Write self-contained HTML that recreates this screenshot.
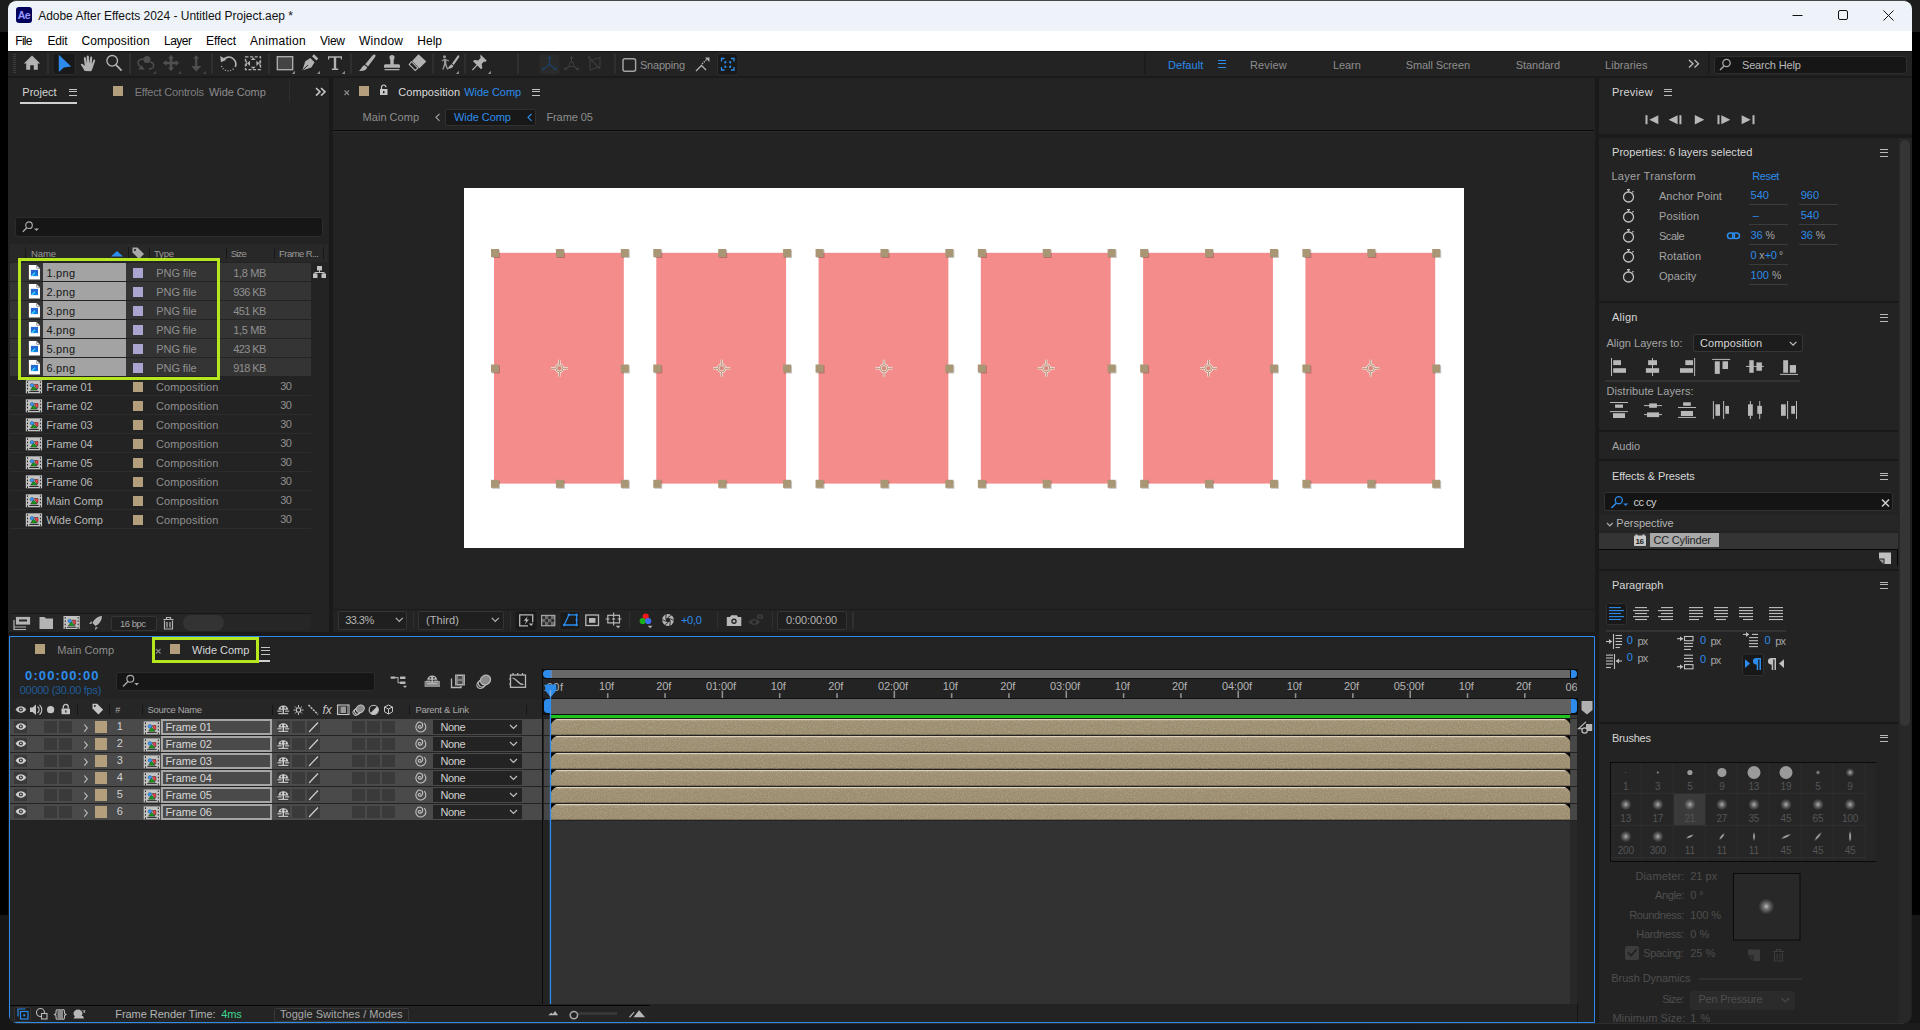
<!DOCTYPE html>
<html lang="en">
<head>
<meta charset="utf-8">
<title>Adobe After Effects 2024 - Untitled Project.aep *</title>
<style>
*{box-sizing:border-box;margin:0;padding:0}
html,body{width:1920px;height:1030px;overflow:hidden;background:#000}
body{font-family:"Liberation Sans",sans-serif;font-size:12px;color:#b4b4b4;position:relative}
.a{position:absolute}
.t{position:absolute;white-space:nowrap}
svg{position:absolute;overflow:visible}
#win{position:absolute;left:8px;top:1px;width:1904px;height:1022px;border-radius:8px;overflow:hidden;background:#1a1a1a}
#in{position:absolute;left:-8px;top:-1px;width:1920px;height:1030px}
.p{position:absolute;background:#232323}
.ham{position:absolute;width:9px;height:7.6px;border-top:1.4px solid #c4c4c4;border-bottom:1.4px solid #c4c4c4}
.ham:after{content:"";position:absolute;left:0;right:0;top:1.7px;border-top:1.4px solid;border-color:inherit}
</style>
</head>
<body>
<div class="a" style="left:0;top:0;width:1920px;height:32px;background:#1c1c1c"></div>
<div class="a" style="left:0;top:915px;width:1920px;height:115px;background:#161616"></div>
<div class="a" style="left:42px;top:1023px;width:1878px;height:7px;background:linear-gradient(90deg,#15171f 0,#15171f 1250px,#1c1c1c 1500px)"></div>
<div class="a" style="left:14px;top:0;width:1892px;height:1px;background:#474747"></div>
<div class="a" style="left:16px;top:1023px;width:1888px;height:1.300px;background:#2e2e2e"></div>
<div id="win"><div id="in">
<!-- top -->
<div class="a" style="left:8px;top:1px;width:1904px;height:30px;background:#eef3f9;"></div>
<div class="a" style="left:16px;top:7px;width:16px;height:16px;background:#00005b;border-radius:3px;color:#9999ff;font-size:10.500px;line-height:16.500px;text-align:center;font-weight:bold;letter-spacing:-0.500px">Ae</div>
<div class="t" style="left:38.20px;top:9px;font-size:12px;line-height:14px;color:#111;letter-spacing:-0.024px;">Adobe After Effects 2024 - Untitled Project.aep *</div>
<svg style="left:1790px;top:5px;" width="120" height="22" viewBox="0 0 120 22"><path d="M2.5 10.5h10" stroke="#111" stroke-width="1" fill="none"/><rect x="48.5" y="5.5" width="9" height="9" rx="1.5" stroke="#111" stroke-width="1" fill="none"/><path d="M93.5 5.5l10 10M103.5 5.5l-10 10" stroke="#111" stroke-width="1" fill="none"/></svg>
<div class="a" style="left:8px;top:31px;width:1904px;height:20px;background:#fff;"></div>
<div class="t" style="left:15.30px;top:34px;font-size:12px;line-height:14px;color:#000;letter-spacing:-0.711px;">File</div>
<div class="t" style="left:47.40px;top:34px;font-size:12px;line-height:14px;color:#000;letter-spacing:-0.193px;">Edit</div>
<div class="t" style="left:81.40px;top:34px;font-size:12px;line-height:14px;color:#000;letter-spacing:0.160px;">Composition</div>
<div class="t" style="left:164.00px;top:34px;font-size:12px;line-height:14px;color:#000;letter-spacing:-0.504px;">Layer</div>
<div class="t" style="left:206.00px;top:34px;font-size:12px;line-height:14px;color:#000;letter-spacing:-0.093px;">Effect</div>
<div class="t" style="left:250.00px;top:34px;font-size:12px;line-height:14px;color:#000;letter-spacing:0.292px;">Animation</div>
<div class="t" style="left:320.00px;top:34px;font-size:12px;line-height:14px;color:#000;letter-spacing:-0.264px;">View</div>
<div class="t" style="left:359.00px;top:34px;font-size:12px;line-height:14px;color:#000;letter-spacing:0.264px;">Window</div>
<div class="t" style="left:417.30px;top:34px;font-size:12px;line-height:14px;color:#000;letter-spacing:0.007px;">Help</div>
<div class="a" style="left:8px;top:51px;width:1904px;height:25px;background:#232323;border-top:1px solid #141414;"></div>
<div class="a" style="left:13px;top:54px;width:3px;height:20px;background:repeating-linear-gradient(#3c3c3c 0,#3c3c3c 1px,transparent 1px,transparent 2px);"></div>
<div class="a" style="left:47px;top:53px;width:2px;height:21px;background:#2f2f2f;border-radius:1px;"></div>
<div class="a" style="left:129px;top:53px;width:2px;height:21px;background:#2f2f2f;border-radius:1px;"></div>
<div class="a" style="left:211px;top:53px;width:2px;height:21px;background:#2f2f2f;border-radius:1px;"></div>
<div class="a" style="left:268px;top:53px;width:2px;height:21px;background:#2f2f2f;border-radius:1px;"></div>
<div class="a" style="left:350px;top:53px;width:2px;height:21px;background:#2f2f2f;border-radius:1px;"></div>
<div class="a" style="left:432px;top:53px;width:2px;height:21px;background:#2f2f2f;border-radius:1px;"></div>
<div class="a" style="left:464px;top:53px;width:2px;height:21px;background:#2f2f2f;border-radius:1px;"></div>
<div class="a" style="left:517px;top:53px;width:2px;height:21px;background:#2f2f2f;border-radius:1px;"></div>
<div class="a" style="left:614px;top:53px;width:2px;height:21px;background:#2f2f2f;border-radius:1px;"></div>
<svg style="left:0px;top:0px;" width="1920" height="80" viewBox="0 0 1920 80"><path d="M32 55.6l-8.2 7.9h2.4v6.3h4v-4.6h3.6v4.6h4v-6.3h2.4z" fill="#b2b2b2"/><rect x="53" y="53" width="22.300" height="21.500" rx="2.500" fill="#191919" stroke="#2d2d2d"/><path d="M58.8 54.8l12.4 11.6-7.4 1.1-5 4.6z" fill="#2d8ceb"/><path d="M84.6 71c-1.2-2.4-2.6-4.6-3.9-6.4 0.6-1 1.7-0.9 2.5-0.2l1.6 1.7-1-8.4c0.6-0.9 1.7-0.7 2 0.2l1 5.6-0.1-7.4c0.6-0.9 1.9-0.8 2.1 0.1l0.5 7.3 1-6.6c0.6-0.8 1.8-0.6 1.9 0.3l-0.5 7.1 1.9-4.6c0.7-0.6 1.7-0.2 1.6 0.7l-2.5 7.6c-0.4 1.6-1 2.4-1.7 3.2z" fill="#b2b2b2"/><circle cx="112.2" cy="60.8" r="5.3" fill="none" stroke="#b2b2b2" stroke-width="1.4"/><path d="M116 64.8l5.6 5.8" stroke="#b2b2b2" stroke-width="1.8"/><circle cx="147" cy="59.5" r="3.6" fill="#4f4f4f"/><path d="M144 59c-4-0.5-7 2-5.5 5.5l1.5 2" fill="none" stroke="#4f4f4f" stroke-width="1.4"/><path d="M138.500 69.5h6l-3-4.500z" fill="#4f4f4f"/><path d="M150.500 62c4 1.500 5 6-1.500 7" fill="none" stroke="#4f4f4f" stroke-width="1.400"/><path d="M156 74v-3.2l-3.2 3.2z" fill="#444"/><path d="M171 54.800l3 3.600h-1.700v3.300h3.300v-1.700l3.600 3-3.600 3v-1.700h-3.300v3.300h1.700l-3 3.600-3-3.600h1.700v-3.300h-3.300v1.700l-3.600-3 3.600-3v1.700h3.300v-3.300h-1.700z" fill="#4f4f4f"/><path d="M181 74v-3.2l-3.2 3.2z" fill="#444"/><path d="M196.200 55.200l3 3.200h-1.900v7.600h3.900l-5 5.500-5-5.500h3.900v-7.600h-1.900z" fill="#4f4f4f"/><path d="M206 74v-3.2l-3.2 3.2z" fill="#444"/><path d="M222.500 60.500c3-4 8-4.500 11-1.500 2.500 2.500 2.800 5.500 1.800 8" fill="none" stroke="#b2b2b2" stroke-width="1.600"/><path d="M220.200 56l0.800 6.200 5.400-2.400z" fill="#b2b2b2"/><path d="M221.500 66c1.500 5 8 6.500 12.500 2.500" fill="none" stroke="#b2b2b2" stroke-width="1.300" stroke-dasharray="1 1.700"/><rect x="245.500" y="56.800" width="15" height="12.800" fill="none" stroke="#b2b2b2" stroke-width="1.300" stroke-dasharray="3 1.600"/><path d="M253.200 57.600l2.500 2.300h-5zM253.200 69l2.500-2.300h-5zM247 63.300l3-2.600v5.200zM259.400 63.300l-3-2.600v5.200z" fill="#b2b2b2"/><path d="M246.600 60.700v5.200M259.800 60.700v5.200" stroke="#b2b2b2" stroke-width="0.900"/><rect x="277.300" y="56.700" width="15.400" height="13" fill="#444" stroke="#b2b2b2" stroke-width="1.300"/><path d="M295 74v-3.2l-3.2 3.2z" fill="#8a8a8a"/><path d="M302.300 70.600l3-9.300 5-3.400 4.300 4.400-3.300 5.100zM312 56.200l2-2 4.300 4.300-2 2z" fill="#b2b2b2"/><path d="M302.600 70.300l5.300-5.300" stroke="#232323" stroke-width="1"/><path d="M320 74v-3.2l-3.2 3.2z" fill="#8a8a8a"/><path d="M328 56.300h14v3.300h-1.200v-1.800h-4.600v10.700h2v1.500h-6.400v-1.500h2v-10.700h-4.600v1.800h-1.200z" fill="#b2b2b2"/><path d="M345 74v-3.2l-3.2 3.2z" fill="#8a8a8a"/><path d="M375 54.600c1 0.700 0.400 2.100-0.200 3l-6.800 8.800-2.800-2.200 7.200-8.600c0.700-0.800 1.800-1.600 2.600-1zM364.300 64.900l3 2.400c-0.900 3.200-4.400 4.200-8.500 3.700 2.400-1.300 2.500-4.400 5.500-6.100z" fill="#b2b2b2"/><path d="M392 55a2.600 2.600 0 0 1 2.600 2.600c0 1.200-0.900 1.800-0.900 3.200v3.400h4.400c1.200 0 1.900 0.600 1.900 1.800v1.800h-16v-1.800c0-1.200 0.700-1.800 1.900-1.800h4.400v-3.400c0-1.400-0.900-2-0.900-3.200a2.600 2.600 0 0 1 2.600-2.600zM384.600 69h14.800v1.200h-14.800z" fill="#b2b2b2"/><path d="M418.500 54.300l7.800 7.200-6.800 6.800-7.400-7.400z" fill="#b2b2b2"/><path d="M411.500 61.700l-2.300 2.700 6 6 2.800-2.400z" fill="none" stroke="#b2b2b2" stroke-width="1.100"/><circle cx="444.500" cy="56.700" r="1.500" fill="#999"/><path d="M444.500 58.600l-3 2.200 0.500 0.800 2-1.200v3.600l-1.800 5.600h1.300l1.800-4.400 1.600 4.400h1.300l-1.800-5.800v-3.200l2.400 0.800 0.300-0.900z" fill="#999"/><path d="M459 55.500c0.700 0.600 0.200 1.600-0.200 2.200l-5 7.200-1.800-1.400 5.200-7.200c0.500-0.600 1.200-1.200 1.800-0.800zM451.400 64.200l2 1.600c-0.600 2.200-3.200 3-6.200 2.800 1.600-1 2-3 4.200-4.400z" fill="#b2b2b2"/><path d="M459 74v-3.2l-3.2 3.2z" fill="#8a8a8a"/><path d="M480.500 54.600l6.200 6-1.400 1.300-1.200-0.400-2.400 2.600 0.600 3.800-1.300 1.300-3.600-3.600-4.600 4.800-0.800-0.800 4.600-4.800-3.600-3.600 1.300-1.300 3.800 0.600 2.600-2.400-0.400-1.200z" fill="#b2b2b2"/><path d="M491 74v-3.2l-3.2 3.2z" fill="#8a8a8a"/><rect x="539.5" y="54.500" width="20" height="20" rx="2" fill="#2a2a2a"/><path d="M549.5 57v7.500l-6 4.500M549.5 64.500l6 4.500" fill="none" stroke="#1b426b" stroke-width="1.100"/><path d="M549.5 55.800l2 2.600h-4zM541.9 70.200l1-3 2.200 2.600zM557.1 70.200l-1-3-2.200 2.600z" fill="#1b426b"/><path d="M571.5 57v7.500l-6 4.500M571.5 64.500l6 4.500" fill="none" stroke="#404040" stroke-width="1.100"/><path d="M571.5 55.800l2 2.600h-4zM563.9 70.200l1-3 2.200 2.600zM579.1 70.200l-1-3-2.200 2.600z" fill="#404040"/><circle cx="571.5" cy="64.500" r="2.300" fill="#232323" stroke="#404040"/><path d="M590 61l10-3.500v9l-10 3.500zM588.500 57l11.500 12" fill="none" stroke="#3c3c3c" stroke-width="1.200"/><path d="M588 56.300h3l-3 3z" fill="#3c3c3c"/><rect x="623" y="58.700" width="12.600" height="12.600" rx="2" fill="none" stroke="#a2a2a2" stroke-width="1.500"/><path d="M696 71l5.500-5.500 4.500 4.500" fill="none" stroke="#b2b2b2" stroke-width="1.300"/><path d="M702 64l5-5" stroke="#b2b2b2" stroke-width="1.300" stroke-dasharray="1.500 1"/><path d="M709.500 57.500v4.500l-4.500-4.500z" fill="#b2b2b2"/><rect x="717.500" y="53.500" width="20.500" height="21.500" rx="2.500" fill="#191919" stroke="#2d2d2d"/><path d="M721.500 61.500v-3h3M731 58.500h3v3M734 67v3h-3M724.500 70h-3v-3M725 63.500v-1.500h1.500M729 62h1.500v1.500M730.500 65.500v1.500h-1.500M726.500 67h-1.500v-1.500" fill="none" stroke="#2d8ceb" stroke-width="1.300"/></svg>
<div class="t" style="left:640.00px;top:59px;font-size:11px;line-height:12px;color:#8e8e8e;letter-spacing:-0.212px;">Snapping</div>
<div class="a" style="left:1144px;top:53px;width:2px;height:21px;background:#1c1c1c;"></div>
<div class="t" style="left:1168.00px;top:59px;font-size:11px;line-height:12px;color:#2d8ceb;letter-spacing:0.075px;">Default</div>
<div class="ham" style="left:1218px;top:60px;border-color:#2d8ceb;width:8px"></div><style>#hb:after{border-color:#2d8ceb}</style><div class="t" style="left:1250.00px;top:59px;font-size:11px;line-height:12px;color:#8e8e8e;letter-spacing:0.127px;">Review</div>
<div class="t" style="left:1333.00px;top:59px;font-size:11px;line-height:12px;color:#8e8e8e;letter-spacing:-0.083px;">Learn</div>
<div class="t" style="left:1405.80px;top:59px;font-size:11px;line-height:12px;color:#8e8e8e;letter-spacing:-0.110px;">Small Screen</div>
<div class="t" style="left:1515.80px;top:59px;font-size:11px;line-height:12px;color:#8e8e8e;letter-spacing:-0.063px;">Standard</div>
<div class="t" style="left:1605.00px;top:59px;font-size:11px;line-height:12px;color:#8e8e8e;letter-spacing:0.040px;">Libraries</div>
<svg style="left:1688px;top:59px;" width="12" height="10" viewBox="0 0 12 10"><path d="M1 1l4 3.800-4 3.800M6.500 1l4 3.800-4 3.800" fill="none" stroke="#b8b8b8" stroke-width="1.400"/></svg>
<div class="a" style="left:1708px;top:53px;width:2px;height:21px;background:#1c1c1c;"></div>
<div class="a" style="left:1714px;top:55.5px;width:193px;height:18.5px;background:#161616;border:1px solid #2e2e2e;border-radius:3px;"></div>
<svg style="left:1718px;top:58px;" width="14" height="13" viewBox="0 0 14 13"><circle cx="8.500" cy="5" r="3.700" fill="none" stroke="#a8a8a8" stroke-width="1.300"/><path d="M6 8l-4 4" stroke="#a8a8a8" stroke-width="1.500"/></svg>
<div class="t" style="left:1742.00px;top:59px;font-size:11px;line-height:12px;color:#b8b8b8;letter-spacing:-0.173px;">Search Help</div>
<!-- proj -->
<div class="a" style="left:8px;top:78px;width:321px;height:554px;background:#232323;"></div>
<div class="t" style="left:22.30px;top:86px;font-size:11px;line-height:12px;color:#d6d6d6;letter-spacing:0.011px;">Project</div>
<div class="ham" style="left:69px;top:88.500px;width:8px"></div><div class="a" style="left:20px;top:102px;width:57px;height:2px;background:#d0d0d0;"></div>
<div class="a" style="left:113px;top:86px;width:10px;height:10px;background:#b49f7c;"></div>
<div class="t" style="left:134.70px;top:86px;font-size:11px;line-height:12px;color:#7e7e7e;letter-spacing:-0.189px;">Effect Controls</div>
<div class="t" style="left:209.00px;top:86px;font-size:11px;line-height:12px;color:#8e8e8e;letter-spacing:-0.082px;">Wide Comp</div>
<div class="a" style="left:289px;top:81px;width:1px;height:21px;background:#2e2e2e;"></div>
<svg style="left:315px;top:87px;" width="11" height="10" viewBox="0 0 11 10"><path d="M1 1l4 3.800-4 3.800M6 1l4 3.800-4 3.800" fill="none" stroke="#c4c4c4" stroke-width="1.600"/></svg>
<div class="a" style="left:15px;top:217px;width:308px;height:19.5px;background:#161616;border:1px solid #2c2c2c;border-radius:3px;"></div>
<svg style="left:21px;top:220px;" width="20" height="14" viewBox="0 0 20 14"><circle cx="8" cy="5.200" r="3.300" fill="none" stroke="#a8a8a8" stroke-width="1.200"/><path d="M5.800 7.800l-4 4" stroke="#a8a8a8" stroke-width="1.400"/><path d="M13 8.500h5l-2.500 2.500z" fill="#a8a8a8"/></svg>
<div class="a" style="left:10px;top:244px;width:318px;height:18px;background:#282828;"></div>
<div class="a" style="left:25px;top:247px;width:1.2px;height:12px;background:#171717;"></div>
<div class="a" style="left:127.5px;top:247px;width:1.2px;height:12px;background:#171717;"></div>
<div class="a" style="left:148.5px;top:247px;width:1.2px;height:12px;background:#171717;"></div>
<div class="a" style="left:225.5px;top:247px;width:1.2px;height:12px;background:#171717;"></div>
<div class="a" style="left:273.5px;top:247px;width:1.2px;height:12px;background:#171717;"></div>
<div class="a" style="left:323px;top:247px;width:1.2px;height:12px;background:#171717;"></div>
<div class="t" style="left:31.00px;top:248px;font-size:9.5px;line-height:11px;color:#9a9a9a;letter-spacing:-0.114px;">Name</div>
<svg style="left:111px;top:250px;" width="13" height="7" viewBox="0 0 13 7"><path d="M0 6.500l6-5.500 6 5.500z" fill="#2d8ceb"/></svg>
<svg style="left:131px;top:246px;" width="14" height="14" viewBox="0 0 14 14"><path d="M1.500 1.500h5l6.500 6.500-5 5-6.500-6.500z" fill="#a8a8a8"/><circle cx="4" cy="4" r="1.100" fill="#282828"/></svg>
<div class="t" style="left:154.00px;top:248px;font-size:9.5px;line-height:11px;color:#9a9a9a;letter-spacing:-0.198px;">Type</div>
<div class="t" style="left:230.70px;top:248px;font-size:9.5px;line-height:11px;color:#9a9a9a;letter-spacing:-0.793px;">Size</div>
<div class="t" style="left:279.00px;top:248px;font-size:9.5px;line-height:11px;color:#9a9a9a;letter-spacing:-0.540px;">Frame R...</div>
<div class="a" style="left:10px;top:263px;width:301px;height:18px;background:#343434;"></div>
<div class="a" style="left:43px;top:263px;width:83px;height:18px;background:#a3a3a3;"></div>
<div class="t" style="left:46.40px;top:267px;font-size:11px;line-height:12px;color:#161616;letter-spacing:0.269px;">1.png</div>
<div class="a" style="left:132.5px;top:268px;width:10px;height:10px;background:#a9a5d0;"></div>
<div class="t" style="left:156.30px;top:267px;font-size:11px;line-height:12px;color:#909090;letter-spacing:-0.079px;">PNG file</div>
<div class="t" style="left:233.20px;top:267px;font-size:11px;line-height:12px;color:#909090;letter-spacing:-0.329px;">1,8 MB</div>
<div class="a" style="left:10px;top:282px;width:301px;height:18px;background:#343434;"></div>
<div class="a" style="left:43px;top:282px;width:83px;height:18px;background:#a3a3a3;"></div>
<div class="t" style="left:46.40px;top:286px;font-size:11px;line-height:12px;color:#161616;letter-spacing:0.269px;">2.png</div>
<div class="a" style="left:132.5px;top:287px;width:10px;height:10px;background:#a9a5d0;"></div>
<div class="t" style="left:156.30px;top:286px;font-size:11px;line-height:12px;color:#909090;letter-spacing:-0.079px;">PNG file</div>
<div class="t" style="left:233.20px;top:286px;font-size:11px;line-height:12px;color:#909090;letter-spacing:-0.577px;">936 KB</div>
<div class="a" style="left:10px;top:301px;width:301px;height:18px;background:#343434;"></div>
<div class="a" style="left:43px;top:301px;width:83px;height:18px;background:#a3a3a3;"></div>
<div class="t" style="left:46.40px;top:305px;font-size:11px;line-height:12px;color:#161616;letter-spacing:0.269px;">3.png</div>
<div class="a" style="left:132.5px;top:306px;width:10px;height:10px;background:#a9a5d0;"></div>
<div class="t" style="left:156.30px;top:305px;font-size:11px;line-height:12px;color:#909090;letter-spacing:-0.079px;">PNG file</div>
<div class="t" style="left:233.20px;top:305px;font-size:11px;line-height:12px;color:#909090;letter-spacing:-0.577px;">451 KB</div>
<div class="a" style="left:10px;top:320px;width:301px;height:18px;background:#343434;"></div>
<div class="a" style="left:43px;top:320px;width:83px;height:18px;background:#a3a3a3;"></div>
<div class="t" style="left:46.40px;top:324px;font-size:11px;line-height:12px;color:#161616;letter-spacing:0.269px;">4.png</div>
<div class="a" style="left:132.5px;top:325px;width:10px;height:10px;background:#a9a5d0;"></div>
<div class="t" style="left:156.30px;top:324px;font-size:11px;line-height:12px;color:#909090;letter-spacing:-0.079px;">PNG file</div>
<div class="t" style="left:233.20px;top:324px;font-size:11px;line-height:12px;color:#909090;letter-spacing:-0.329px;">1,5 MB</div>
<div class="a" style="left:10px;top:339px;width:301px;height:18px;background:#343434;"></div>
<div class="a" style="left:43px;top:339px;width:83px;height:18px;background:#a3a3a3;"></div>
<div class="t" style="left:46.40px;top:343px;font-size:11px;line-height:12px;color:#161616;letter-spacing:0.269px;">5.png</div>
<div class="a" style="left:132.5px;top:344px;width:10px;height:10px;background:#a9a5d0;"></div>
<div class="t" style="left:156.30px;top:343px;font-size:11px;line-height:12px;color:#909090;letter-spacing:-0.079px;">PNG file</div>
<div class="t" style="left:233.20px;top:343px;font-size:11px;line-height:12px;color:#909090;letter-spacing:-0.577px;">423 KB</div>
<div class="a" style="left:10px;top:358px;width:301px;height:18px;background:#343434;"></div>
<div class="a" style="left:43px;top:358px;width:83px;height:18px;background:#a3a3a3;"></div>
<div class="t" style="left:46.40px;top:362px;font-size:11px;line-height:12px;color:#161616;letter-spacing:0.269px;">6.png</div>
<div class="a" style="left:132.5px;top:363px;width:10px;height:10px;background:#a9a5d0;"></div>
<div class="t" style="left:156.30px;top:362px;font-size:11px;line-height:12px;color:#909090;letter-spacing:-0.079px;">PNG file</div>
<div class="t" style="left:233.20px;top:362px;font-size:11px;line-height:12px;color:#909090;letter-spacing:-0.577px;">918 KB</div>
<div class="a" style="left:10px;top:395px;width:301px;height:1px;background:#2c2c2c;"></div>
<div class="t" style="left:46.20px;top:381px;font-size:11px;line-height:12px;color:#b8b8b8;letter-spacing:-0.096px;">Frame 01</div>
<div class="a" style="left:132.5px;top:382px;width:10px;height:10px;background:#b49f7c;"></div>
<div class="t" style="left:156.00px;top:381px;font-size:11px;line-height:12px;color:#909090;letter-spacing:0.116px;">Composition</div>
<div class="t" style="left:280.20px;top:380px;font-size:11px;line-height:12px;color:#909090;letter-spacing:-0.434px;">30</div>
<div class="a" style="left:10px;top:414px;width:301px;height:1px;background:#2c2c2c;"></div>
<div class="t" style="left:46.20px;top:400px;font-size:11px;line-height:12px;color:#b8b8b8;letter-spacing:-0.096px;">Frame 02</div>
<div class="a" style="left:132.5px;top:401px;width:10px;height:10px;background:#b49f7c;"></div>
<div class="t" style="left:156.00px;top:400px;font-size:11px;line-height:12px;color:#909090;letter-spacing:0.116px;">Composition</div>
<div class="t" style="left:280.20px;top:399px;font-size:11px;line-height:12px;color:#909090;letter-spacing:-0.434px;">30</div>
<div class="a" style="left:10px;top:433px;width:301px;height:1px;background:#2c2c2c;"></div>
<div class="t" style="left:46.20px;top:419px;font-size:11px;line-height:12px;color:#b8b8b8;letter-spacing:-0.096px;">Frame 03</div>
<div class="a" style="left:132.5px;top:420px;width:10px;height:10px;background:#b49f7c;"></div>
<div class="t" style="left:156.00px;top:419px;font-size:11px;line-height:12px;color:#909090;letter-spacing:0.116px;">Composition</div>
<div class="t" style="left:280.20px;top:418px;font-size:11px;line-height:12px;color:#909090;letter-spacing:-0.434px;">30</div>
<div class="a" style="left:10px;top:452px;width:301px;height:1px;background:#2c2c2c;"></div>
<div class="t" style="left:46.20px;top:438px;font-size:11px;line-height:12px;color:#b8b8b8;letter-spacing:-0.096px;">Frame 04</div>
<div class="a" style="left:132.5px;top:439px;width:10px;height:10px;background:#b49f7c;"></div>
<div class="t" style="left:156.00px;top:438px;font-size:11px;line-height:12px;color:#909090;letter-spacing:0.116px;">Composition</div>
<div class="t" style="left:280.20px;top:437px;font-size:11px;line-height:12px;color:#909090;letter-spacing:-0.434px;">30</div>
<div class="a" style="left:10px;top:471px;width:301px;height:1px;background:#2c2c2c;"></div>
<div class="t" style="left:46.20px;top:457px;font-size:11px;line-height:12px;color:#b8b8b8;letter-spacing:-0.096px;">Frame 05</div>
<div class="a" style="left:132.5px;top:458px;width:10px;height:10px;background:#b49f7c;"></div>
<div class="t" style="left:156.00px;top:457px;font-size:11px;line-height:12px;color:#909090;letter-spacing:0.116px;">Composition</div>
<div class="t" style="left:280.20px;top:456px;font-size:11px;line-height:12px;color:#909090;letter-spacing:-0.434px;">30</div>
<div class="a" style="left:10px;top:490px;width:301px;height:1px;background:#2c2c2c;"></div>
<div class="t" style="left:46.20px;top:476px;font-size:11px;line-height:12px;color:#b8b8b8;letter-spacing:-0.096px;">Frame 06</div>
<div class="a" style="left:132.5px;top:477px;width:10px;height:10px;background:#b49f7c;"></div>
<div class="t" style="left:156.00px;top:476px;font-size:11px;line-height:12px;color:#909090;letter-spacing:0.116px;">Composition</div>
<div class="t" style="left:280.20px;top:475px;font-size:11px;line-height:12px;color:#909090;letter-spacing:-0.434px;">30</div>
<div class="a" style="left:10px;top:509px;width:301px;height:1px;background:#2c2c2c;"></div>
<div class="t" style="left:46.20px;top:495px;font-size:11px;line-height:12px;color:#b8b8b8;letter-spacing:0.070px;">Main Comp</div>
<div class="a" style="left:132.5px;top:496px;width:10px;height:10px;background:#b49f7c;"></div>
<div class="t" style="left:156.00px;top:495px;font-size:11px;line-height:12px;color:#909090;letter-spacing:0.116px;">Composition</div>
<div class="t" style="left:280.20px;top:494px;font-size:11px;line-height:12px;color:#909090;letter-spacing:-0.434px;">30</div>
<div class="a" style="left:10px;top:528px;width:301px;height:1px;background:#2c2c2c;"></div>
<div class="t" style="left:46.20px;top:514px;font-size:11px;line-height:12px;color:#b8b8b8;letter-spacing:-0.082px;">Wide Comp</div>
<div class="a" style="left:132.5px;top:515px;width:10px;height:10px;background:#b49f7c;"></div>
<div class="t" style="left:156.00px;top:514px;font-size:11px;line-height:12px;color:#909090;letter-spacing:0.116px;">Composition</div>
<div class="t" style="left:280.20px;top:513px;font-size:11px;line-height:12px;color:#909090;letter-spacing:-0.434px;">30</div>
<svg style="left:0px;top:0px;" width="340" height="640" viewBox="0 0 340 640"><g transform="translate(28.9 265)"><path d="M0 0h7.600l3.500 3.500v10.900h-11.100z" fill="#fdfdfd"/><path d="M7.600 0v3.500h3.500z" fill="#5a5a5a"/><path d="M8.200 0.900v2h2z" fill="#fff"/><rect x="2" y="4.900" width="7.100" height="6.200" fill="#2468d4"/><path d="M2 11.100l3.600-3.900 3.500 3.300v0.600z" fill="#0a86e6"/><path d="M2 11.100l3.600-3.900 0.900 0.900-2.700 3z" fill="#44d8ff"/></g><g transform="translate(28.9 284)"><path d="M0 0h7.600l3.500 3.500v10.900h-11.100z" fill="#fdfdfd"/><path d="M7.600 0v3.500h3.500z" fill="#5a5a5a"/><path d="M8.200 0.900v2h2z" fill="#fff"/><rect x="2" y="4.900" width="7.100" height="6.200" fill="#2468d4"/><path d="M2 11.100l3.600-3.900 3.500 3.300v0.600z" fill="#0a86e6"/><path d="M2 11.100l3.600-3.900 0.900 0.900-2.700 3z" fill="#44d8ff"/></g><g transform="translate(28.9 303)"><path d="M0 0h7.600l3.500 3.500v10.900h-11.100z" fill="#fdfdfd"/><path d="M7.600 0v3.500h3.500z" fill="#5a5a5a"/><path d="M8.200 0.900v2h2z" fill="#fff"/><rect x="2" y="4.900" width="7.100" height="6.200" fill="#2468d4"/><path d="M2 11.100l3.600-3.900 3.500 3.300v0.600z" fill="#0a86e6"/><path d="M2 11.100l3.600-3.900 0.900 0.900-2.700 3z" fill="#44d8ff"/></g><g transform="translate(28.9 322)"><path d="M0 0h7.600l3.500 3.500v10.900h-11.100z" fill="#fdfdfd"/><path d="M7.600 0v3.500h3.500z" fill="#5a5a5a"/><path d="M8.200 0.900v2h2z" fill="#fff"/><rect x="2" y="4.900" width="7.100" height="6.200" fill="#2468d4"/><path d="M2 11.100l3.600-3.900 3.500 3.300v0.600z" fill="#0a86e6"/><path d="M2 11.100l3.600-3.900 0.900 0.900-2.700 3z" fill="#44d8ff"/></g><g transform="translate(28.9 341)"><path d="M0 0h7.600l3.500 3.500v10.900h-11.100z" fill="#fdfdfd"/><path d="M7.600 0v3.500h3.500z" fill="#5a5a5a"/><path d="M8.200 0.900v2h2z" fill="#fff"/><rect x="2" y="4.900" width="7.100" height="6.200" fill="#2468d4"/><path d="M2 11.100l3.600-3.900 3.500 3.300v0.600z" fill="#0a86e6"/><path d="M2 11.100l3.600-3.900 0.900 0.900-2.700 3z" fill="#44d8ff"/></g><g transform="translate(28.9 360)"><path d="M0 0h7.600l3.500 3.500v10.900h-11.100z" fill="#fdfdfd"/><path d="M7.600 0v3.500h3.500z" fill="#5a5a5a"/><path d="M8.200 0.900v2h2z" fill="#fff"/><rect x="2" y="4.900" width="7.100" height="6.200" fill="#2468d4"/><path d="M2 11.100l3.600-3.900 3.500 3.300v0.600z" fill="#0a86e6"/><path d="M2 11.100l3.600-3.900 0.900 0.900-2.700 3z" fill="#44d8ff"/></g><g transform="translate(25.8 380.3)"><rect x="0" y="0" width="16.300" height="13" fill="#c2c2c2"/><ellipse cx="1.7" cy="1.8" rx="0.550" ry="0.900" fill="#1c1c1c"/><ellipse cx="1.7" cy="5.1" rx="0.550" ry="0.900" fill="#1c1c1c"/><ellipse cx="1.7" cy="8.4" rx="0.550" ry="0.900" fill="#1c1c1c"/><rect x="1.25" y="11" width="0.900" height="2" fill="#1c1c1c"/><ellipse cx="14.6" cy="1.8" rx="0.550" ry="0.900" fill="#1c1c1c"/><ellipse cx="14.6" cy="5.1" rx="0.550" ry="0.900" fill="#1c1c1c"/><ellipse cx="14.6" cy="8.4" rx="0.550" ry="0.900" fill="#1c1c1c"/><rect x="14.15" y="11" width="0.900" height="2" fill="#1c1c1c"/><rect x="3.500" y="10.800" width="9.500" height="0.900" fill="#1c1c1c"/><path d="M7.700 5.800l3.800 4h-6.600z" fill="#14a014" stroke="#1c1c1c" stroke-width="0.500"/><path d="M8.500 4.200h3.700v4l-1.200 0.300z" fill="#ff4040" stroke="#1c1c1c" stroke-width="0.500"/><circle cx="6.200" cy="5" r="1.800" fill="#3399ff" stroke="#2a4a6a" stroke-width="0.500"/></g><g transform="translate(25.8 399.3)"><rect x="0" y="0" width="16.300" height="13" fill="#c2c2c2"/><ellipse cx="1.7" cy="1.8" rx="0.550" ry="0.900" fill="#1c1c1c"/><ellipse cx="1.7" cy="5.1" rx="0.550" ry="0.900" fill="#1c1c1c"/><ellipse cx="1.7" cy="8.4" rx="0.550" ry="0.900" fill="#1c1c1c"/><rect x="1.25" y="11" width="0.900" height="2" fill="#1c1c1c"/><ellipse cx="14.6" cy="1.8" rx="0.550" ry="0.900" fill="#1c1c1c"/><ellipse cx="14.6" cy="5.1" rx="0.550" ry="0.900" fill="#1c1c1c"/><ellipse cx="14.6" cy="8.4" rx="0.550" ry="0.900" fill="#1c1c1c"/><rect x="14.15" y="11" width="0.900" height="2" fill="#1c1c1c"/><rect x="3.500" y="10.800" width="9.500" height="0.900" fill="#1c1c1c"/><path d="M7.700 5.800l3.800 4h-6.600z" fill="#14a014" stroke="#1c1c1c" stroke-width="0.500"/><path d="M8.500 4.200h3.700v4l-1.200 0.300z" fill="#ff4040" stroke="#1c1c1c" stroke-width="0.500"/><circle cx="6.200" cy="5" r="1.800" fill="#3399ff" stroke="#2a4a6a" stroke-width="0.500"/></g><g transform="translate(25.8 418.3)"><rect x="0" y="0" width="16.300" height="13" fill="#c2c2c2"/><ellipse cx="1.7" cy="1.8" rx="0.550" ry="0.900" fill="#1c1c1c"/><ellipse cx="1.7" cy="5.1" rx="0.550" ry="0.900" fill="#1c1c1c"/><ellipse cx="1.7" cy="8.4" rx="0.550" ry="0.900" fill="#1c1c1c"/><rect x="1.25" y="11" width="0.900" height="2" fill="#1c1c1c"/><ellipse cx="14.6" cy="1.8" rx="0.550" ry="0.900" fill="#1c1c1c"/><ellipse cx="14.6" cy="5.1" rx="0.550" ry="0.900" fill="#1c1c1c"/><ellipse cx="14.6" cy="8.4" rx="0.550" ry="0.900" fill="#1c1c1c"/><rect x="14.15" y="11" width="0.900" height="2" fill="#1c1c1c"/><rect x="3.500" y="10.800" width="9.500" height="0.900" fill="#1c1c1c"/><path d="M7.700 5.800l3.800 4h-6.600z" fill="#14a014" stroke="#1c1c1c" stroke-width="0.500"/><path d="M8.500 4.200h3.700v4l-1.200 0.300z" fill="#ff4040" stroke="#1c1c1c" stroke-width="0.500"/><circle cx="6.200" cy="5" r="1.800" fill="#3399ff" stroke="#2a4a6a" stroke-width="0.500"/></g><g transform="translate(25.8 437.3)"><rect x="0" y="0" width="16.300" height="13" fill="#c2c2c2"/><ellipse cx="1.7" cy="1.8" rx="0.550" ry="0.900" fill="#1c1c1c"/><ellipse cx="1.7" cy="5.1" rx="0.550" ry="0.900" fill="#1c1c1c"/><ellipse cx="1.7" cy="8.4" rx="0.550" ry="0.900" fill="#1c1c1c"/><rect x="1.25" y="11" width="0.900" height="2" fill="#1c1c1c"/><ellipse cx="14.6" cy="1.8" rx="0.550" ry="0.900" fill="#1c1c1c"/><ellipse cx="14.6" cy="5.1" rx="0.550" ry="0.900" fill="#1c1c1c"/><ellipse cx="14.6" cy="8.4" rx="0.550" ry="0.900" fill="#1c1c1c"/><rect x="14.15" y="11" width="0.900" height="2" fill="#1c1c1c"/><rect x="3.500" y="10.800" width="9.500" height="0.900" fill="#1c1c1c"/><path d="M7.700 5.800l3.800 4h-6.600z" fill="#14a014" stroke="#1c1c1c" stroke-width="0.500"/><path d="M8.500 4.200h3.700v4l-1.200 0.300z" fill="#ff4040" stroke="#1c1c1c" stroke-width="0.500"/><circle cx="6.200" cy="5" r="1.800" fill="#3399ff" stroke="#2a4a6a" stroke-width="0.500"/></g><g transform="translate(25.8 456.3)"><rect x="0" y="0" width="16.300" height="13" fill="#c2c2c2"/><ellipse cx="1.7" cy="1.8" rx="0.550" ry="0.900" fill="#1c1c1c"/><ellipse cx="1.7" cy="5.1" rx="0.550" ry="0.900" fill="#1c1c1c"/><ellipse cx="1.7" cy="8.4" rx="0.550" ry="0.900" fill="#1c1c1c"/><rect x="1.25" y="11" width="0.900" height="2" fill="#1c1c1c"/><ellipse cx="14.6" cy="1.8" rx="0.550" ry="0.900" fill="#1c1c1c"/><ellipse cx="14.6" cy="5.1" rx="0.550" ry="0.900" fill="#1c1c1c"/><ellipse cx="14.6" cy="8.4" rx="0.550" ry="0.900" fill="#1c1c1c"/><rect x="14.15" y="11" width="0.900" height="2" fill="#1c1c1c"/><rect x="3.500" y="10.800" width="9.500" height="0.900" fill="#1c1c1c"/><path d="M7.700 5.800l3.800 4h-6.600z" fill="#14a014" stroke="#1c1c1c" stroke-width="0.500"/><path d="M8.500 4.200h3.700v4l-1.200 0.300z" fill="#ff4040" stroke="#1c1c1c" stroke-width="0.500"/><circle cx="6.200" cy="5" r="1.800" fill="#3399ff" stroke="#2a4a6a" stroke-width="0.500"/></g><g transform="translate(25.8 475.3)"><rect x="0" y="0" width="16.300" height="13" fill="#c2c2c2"/><ellipse cx="1.7" cy="1.8" rx="0.550" ry="0.900" fill="#1c1c1c"/><ellipse cx="1.7" cy="5.1" rx="0.550" ry="0.900" fill="#1c1c1c"/><ellipse cx="1.7" cy="8.4" rx="0.550" ry="0.900" fill="#1c1c1c"/><rect x="1.25" y="11" width="0.900" height="2" fill="#1c1c1c"/><ellipse cx="14.6" cy="1.8" rx="0.550" ry="0.900" fill="#1c1c1c"/><ellipse cx="14.6" cy="5.1" rx="0.550" ry="0.900" fill="#1c1c1c"/><ellipse cx="14.6" cy="8.4" rx="0.550" ry="0.900" fill="#1c1c1c"/><rect x="14.15" y="11" width="0.900" height="2" fill="#1c1c1c"/><rect x="3.500" y="10.800" width="9.500" height="0.900" fill="#1c1c1c"/><path d="M7.700 5.800l3.800 4h-6.600z" fill="#14a014" stroke="#1c1c1c" stroke-width="0.500"/><path d="M8.500 4.200h3.700v4l-1.200 0.300z" fill="#ff4040" stroke="#1c1c1c" stroke-width="0.500"/><circle cx="6.200" cy="5" r="1.800" fill="#3399ff" stroke="#2a4a6a" stroke-width="0.500"/></g><g transform="translate(25.8 494.3)"><rect x="0" y="0" width="16.300" height="13" fill="#c2c2c2"/><ellipse cx="1.7" cy="1.8" rx="0.550" ry="0.900" fill="#1c1c1c"/><ellipse cx="1.7" cy="5.1" rx="0.550" ry="0.900" fill="#1c1c1c"/><ellipse cx="1.7" cy="8.4" rx="0.550" ry="0.900" fill="#1c1c1c"/><rect x="1.25" y="11" width="0.900" height="2" fill="#1c1c1c"/><ellipse cx="14.6" cy="1.8" rx="0.550" ry="0.900" fill="#1c1c1c"/><ellipse cx="14.6" cy="5.1" rx="0.550" ry="0.900" fill="#1c1c1c"/><ellipse cx="14.6" cy="8.4" rx="0.550" ry="0.900" fill="#1c1c1c"/><rect x="14.15" y="11" width="0.900" height="2" fill="#1c1c1c"/><rect x="3.500" y="10.800" width="9.500" height="0.900" fill="#1c1c1c"/><path d="M7.700 5.800l3.800 4h-6.600z" fill="#14a014" stroke="#1c1c1c" stroke-width="0.500"/><path d="M8.500 4.200h3.700v4l-1.200 0.300z" fill="#ff4040" stroke="#1c1c1c" stroke-width="0.500"/><circle cx="6.200" cy="5" r="1.800" fill="#3399ff" stroke="#2a4a6a" stroke-width="0.500"/></g><g transform="translate(25.8 513.3)"><rect x="0" y="0" width="16.300" height="13" fill="#c2c2c2"/><ellipse cx="1.7" cy="1.8" rx="0.550" ry="0.900" fill="#1c1c1c"/><ellipse cx="1.7" cy="5.1" rx="0.550" ry="0.900" fill="#1c1c1c"/><ellipse cx="1.7" cy="8.4" rx="0.550" ry="0.900" fill="#1c1c1c"/><rect x="1.25" y="11" width="0.900" height="2" fill="#1c1c1c"/><ellipse cx="14.6" cy="1.8" rx="0.550" ry="0.900" fill="#1c1c1c"/><ellipse cx="14.6" cy="5.1" rx="0.550" ry="0.900" fill="#1c1c1c"/><ellipse cx="14.6" cy="8.4" rx="0.550" ry="0.900" fill="#1c1c1c"/><rect x="14.15" y="11" width="0.900" height="2" fill="#1c1c1c"/><rect x="3.500" y="10.800" width="9.500" height="0.900" fill="#1c1c1c"/><path d="M7.700 5.800l3.800 4h-6.600z" fill="#14a014" stroke="#1c1c1c" stroke-width="0.500"/><path d="M8.500 4.200h3.700v4l-1.200 0.300z" fill="#ff4040" stroke="#1c1c1c" stroke-width="0.500"/><circle cx="6.200" cy="5" r="1.800" fill="#3399ff" stroke="#2a4a6a" stroke-width="0.500"/></g><g fill="#c0c0c0"><rect x="317" y="266" width="5" height="4.500"/><rect x="313" y="273.500" width="4.500" height="4.500"/><rect x="321.500" y="273.500" width="4.500" height="4.500"/><path d="M319 270h1v2h4.500v2h-1v-1h-8v1h-1v-2h4.500z"/></g></svg>
<div class="a" style="left:18px;top:258px;width:201.5px;height:122px;background:transparent;border:3px solid #b6e61e;"></div>
<div class="a" style="left:10px;top:613px;width:301px;height:1px;background:#181818;"></div>
<div class="a" style="left:10px;top:614px;width:301px;height:17px;background:#262626;"></div>
<svg style="left:0px;top:0px;" width="340" height="640" viewBox="0 0 340 640"><g fill="none" stroke="#b4b4b4" stroke-width="1.200"><rect x="16.500" y="617.500" width="13" height="6.500" fill="#b4b4b4"/><path d="M14 620v9.500h12M14 627h12"/></g><rect x="19" y="619.500" width="8" height="2" fill="#262626"/><path d="M39.500 617h5l1.500 1.500h7v10.500h-13.500z" fill="#b4b4b4"/><g transform="translate(63.5 616)"><rect x="0" y="0" width="16.300" height="13" fill="#c2c2c2"/><ellipse cx="1.7" cy="1.8" rx="0.550" ry="0.900" fill="#1c1c1c"/><ellipse cx="1.7" cy="5.1" rx="0.550" ry="0.900" fill="#1c1c1c"/><ellipse cx="1.7" cy="8.4" rx="0.550" ry="0.900" fill="#1c1c1c"/><rect x="1.25" y="11" width="0.900" height="2" fill="#1c1c1c"/><ellipse cx="14.6" cy="1.8" rx="0.550" ry="0.900" fill="#1c1c1c"/><ellipse cx="14.6" cy="5.1" rx="0.550" ry="0.900" fill="#1c1c1c"/><ellipse cx="14.6" cy="8.4" rx="0.550" ry="0.900" fill="#1c1c1c"/><rect x="14.15" y="11" width="0.900" height="2" fill="#1c1c1c"/><rect x="3.500" y="10.800" width="9.500" height="0.900" fill="#1c1c1c"/><path d="M7.700 5.800l3.800 4h-6.600z" fill="#14a014" stroke="#1c1c1c" stroke-width="0.500"/><path d="M8.500 4.200h3.700v4l-1.200 0.300z" fill="#ff4040" stroke="#1c1c1c" stroke-width="0.500"/><circle cx="6.200" cy="5" r="1.800" fill="#3399ff" stroke="#2a4a6a" stroke-width="0.500"/></g><path d="M102 616c-5 0.500-8 3.500-9.500 7l3 3c3.500-1.500 6.200-5 6.500-10zM92 623.500l-3 0.500 2.500-3zM95.500 627l-0.500 3 3-2.500z" fill="#b4b4b4"/><g fill="none" stroke="#b4b4b4" stroke-width="1.200"><path d="M163.500 619.500h10M166.500 619v-1.500h4v1.500"/><path d="M164.500 620.500v8.500h8v-8.500M167 622v5.500M170 622v5.500"/></g></svg>
<div class="a" style="left:110.5px;top:615.5px;width:46px;height:15px;background:#202020;border:1px solid #343434;border-radius:2px;"></div>
<div class="t" style="left:120.00px;top:618px;font-size:9.5px;line-height:11px;color:#a8a8a8;letter-spacing:-0.504px;">16 bpc</div>
<div class="a" style="left:183px;top:615px;width:41px;height:15.5px;background:#333;border-radius:8px;"></div>
<!-- comp -->
<div class="a" style="left:333px;top:78px;width:1262px;height:554px;background:#232323;"></div>
<svg style="left:343px;top:89px;" width="8" height="8" viewBox="0 0 8 8"><path d="M1.500 1.500l4.500 4.500M6 1.500l-4.500 4.500" stroke="#8c8c8c" stroke-width="1.100"/></svg>
<div class="a" style="left:359px;top:86px;width:10px;height:10px;background:#b49f7c;"></div>
<svg style="left:379px;top:84px;" width="10" height="12" viewBox="0 0 10 12"><rect x="1" y="5" width="7.500" height="6" fill="#c8c8c8"/><path d="M2.500 5v-1.800a2.200 2.200 0 0 1 4.400 0" fill="none" stroke="#c8c8c8" stroke-width="1.200"/><rect x="4" y="7" width="1.500" height="2.300" fill="#232323"/></svg>
<div class="t" style="left:398.20px;top:86px;font-size:11px;line-height:12px;color:#dcdcdc;letter-spacing:0.086px;">Composition</div>
<div class="t" style="left:464.30px;top:86px;font-size:11px;line-height:12px;color:#2d8ceb;letter-spacing:-0.082px;">Wide Comp</div>
<div class="ham" style="left:532px;top:88.500px;width:8px"></div><div class="t" style="left:362.60px;top:111px;font-size:11px;line-height:12px;color:#8e8e8e;letter-spacing:0.020px;">Main Comp</div>
<svg style="left:435px;top:113px;" width="6" height="9" viewBox="0 0 6 9"><path d="M4.500 0.800l-3.500 3.500 3.500 3.500" fill="none" stroke="#a0a0a0" stroke-width="1.200"/></svg>
<div class="a" style="left:444.5px;top:108.5px;width:91px;height:17px;background:#181818;border:1px solid #303030;border-radius:2px;"></div>
<div class="t" style="left:454.00px;top:111px;font-size:11px;line-height:12px;color:#2d8ceb;letter-spacing:-0.070px;">Wide Comp</div>
<svg style="left:527px;top:113px;" width="6" height="9" viewBox="0 0 6 9"><path d="M4.500 0.800l-3.500 3.500 3.500 3.500" fill="none" stroke="#2d8ceb" stroke-width="1.200"/></svg>
<div class="t" style="left:546.40px;top:111px;font-size:11px;line-height:12px;color:#8e8e8e;letter-spacing:-0.081px;">Frame 05</div>
<div class="a" style="left:333px;top:129.5px;width:1261px;height:1.5px;background:#080808;"></div>
<div class="a" style="left:333px;top:131px;width:1261px;height:1px;background:#2b2b2b;"></div>
<div class="a" style="left:464px;top:188px;width:1000px;height:360px;background:#fff;"></div>
<svg style="left:0px;top:0px;" width="1600" height="640" viewBox="0 0 1600 640"><rect x="494.00" y="252.800" width="129.800" height="230.800" fill="#f48c8c"/><rect x="656.28" y="252.800" width="129.800" height="230.800" fill="#f48c8c"/><rect x="818.56" y="252.800" width="129.800" height="230.800" fill="#f48c8c"/><rect x="980.84" y="252.800" width="129.800" height="230.800" fill="#f48c8c"/><rect x="1143.12" y="252.800" width="129.800" height="230.800" fill="#f48c8c"/><rect x="1305.40" y="252.800" width="129.800" height="230.800" fill="#f48c8c"/><g fill="none" stroke="#fff" stroke-opacity="0.750" stroke-width="2.400"><circle cx="559.40" cy="368.3" r="3.600"/><path d="M559.40 359.8v5M559.40 371.8v5M550.90 368.3h5M562.90 368.3h5"/></g><g fill="none" stroke="#a99674" stroke-width="1"><circle cx="559.40" cy="368.3" r="3.600"/><circle cx="559.40" cy="368.3" r="1.200"/><path d="M559.40 359.8v5M559.40 371.8v5M550.90 368.3h5M562.90 368.3h5"/></g><rect x="492.00" y="250.00" width="8" height="8" fill="#000" fill-opacity="0.220"/><rect x="491.00" y="249.00" width="8" height="8" fill="#a99674"/><rect x="492.00" y="365.50" width="8" height="8" fill="#000" fill-opacity="0.220"/><rect x="491.00" y="364.50" width="8" height="8" fill="#a99674"/><rect x="492.00" y="480.80" width="8" height="8" fill="#000" fill-opacity="0.220"/><rect x="491.00" y="479.80" width="8" height="8" fill="#a99674"/><rect x="556.90" y="250.00" width="8" height="8" fill="#000" fill-opacity="0.220"/><rect x="555.90" y="249.00" width="8" height="8" fill="#a99674"/><rect x="556.90" y="480.80" width="8" height="8" fill="#000" fill-opacity="0.220"/><rect x="555.90" y="479.80" width="8" height="8" fill="#a99674"/><rect x="621.80" y="250.00" width="8" height="8" fill="#000" fill-opacity="0.220"/><rect x="620.80" y="249.00" width="8" height="8" fill="#a99674"/><rect x="621.80" y="365.50" width="8" height="8" fill="#000" fill-opacity="0.220"/><rect x="620.80" y="364.50" width="8" height="8" fill="#a99674"/><rect x="621.80" y="480.80" width="8" height="8" fill="#000" fill-opacity="0.220"/><rect x="620.80" y="479.80" width="8" height="8" fill="#a99674"/><g fill="none" stroke="#fff" stroke-opacity="0.750" stroke-width="2.400"><circle cx="721.68" cy="368.3" r="3.600"/><path d="M721.68 359.8v5M721.68 371.8v5M713.18 368.3h5M725.18 368.3h5"/></g><g fill="none" stroke="#a99674" stroke-width="1"><circle cx="721.68" cy="368.3" r="3.600"/><circle cx="721.68" cy="368.3" r="1.200"/><path d="M721.68 359.8v5M721.68 371.8v5M713.18 368.3h5M725.18 368.3h5"/></g><rect x="654.28" y="250.00" width="8" height="8" fill="#000" fill-opacity="0.220"/><rect x="653.28" y="249.00" width="8" height="8" fill="#a99674"/><rect x="654.28" y="365.50" width="8" height="8" fill="#000" fill-opacity="0.220"/><rect x="653.28" y="364.50" width="8" height="8" fill="#a99674"/><rect x="654.28" y="480.80" width="8" height="8" fill="#000" fill-opacity="0.220"/><rect x="653.28" y="479.80" width="8" height="8" fill="#a99674"/><rect x="719.18" y="250.00" width="8" height="8" fill="#000" fill-opacity="0.220"/><rect x="718.18" y="249.00" width="8" height="8" fill="#a99674"/><rect x="719.18" y="480.80" width="8" height="8" fill="#000" fill-opacity="0.220"/><rect x="718.18" y="479.80" width="8" height="8" fill="#a99674"/><rect x="784.08" y="250.00" width="8" height="8" fill="#000" fill-opacity="0.220"/><rect x="783.08" y="249.00" width="8" height="8" fill="#a99674"/><rect x="784.08" y="365.50" width="8" height="8" fill="#000" fill-opacity="0.220"/><rect x="783.08" y="364.50" width="8" height="8" fill="#a99674"/><rect x="784.08" y="480.80" width="8" height="8" fill="#000" fill-opacity="0.220"/><rect x="783.08" y="479.80" width="8" height="8" fill="#a99674"/><g fill="none" stroke="#fff" stroke-opacity="0.750" stroke-width="2.400"><circle cx="883.96" cy="368.3" r="3.600"/><path d="M883.96 359.8v5M883.96 371.8v5M875.46 368.3h5M887.46 368.3h5"/></g><g fill="none" stroke="#a99674" stroke-width="1"><circle cx="883.96" cy="368.3" r="3.600"/><circle cx="883.96" cy="368.3" r="1.200"/><path d="M883.96 359.8v5M883.96 371.8v5M875.46 368.3h5M887.46 368.3h5"/></g><rect x="816.56" y="250.00" width="8" height="8" fill="#000" fill-opacity="0.220"/><rect x="815.56" y="249.00" width="8" height="8" fill="#a99674"/><rect x="816.56" y="365.50" width="8" height="8" fill="#000" fill-opacity="0.220"/><rect x="815.56" y="364.50" width="8" height="8" fill="#a99674"/><rect x="816.56" y="480.80" width="8" height="8" fill="#000" fill-opacity="0.220"/><rect x="815.56" y="479.80" width="8" height="8" fill="#a99674"/><rect x="881.46" y="250.00" width="8" height="8" fill="#000" fill-opacity="0.220"/><rect x="880.46" y="249.00" width="8" height="8" fill="#a99674"/><rect x="881.46" y="480.80" width="8" height="8" fill="#000" fill-opacity="0.220"/><rect x="880.46" y="479.80" width="8" height="8" fill="#a99674"/><rect x="946.36" y="250.00" width="8" height="8" fill="#000" fill-opacity="0.220"/><rect x="945.36" y="249.00" width="8" height="8" fill="#a99674"/><rect x="946.36" y="365.50" width="8" height="8" fill="#000" fill-opacity="0.220"/><rect x="945.36" y="364.50" width="8" height="8" fill="#a99674"/><rect x="946.36" y="480.80" width="8" height="8" fill="#000" fill-opacity="0.220"/><rect x="945.36" y="479.80" width="8" height="8" fill="#a99674"/><g fill="none" stroke="#fff" stroke-opacity="0.750" stroke-width="2.400"><circle cx="1046.24" cy="368.3" r="3.600"/><path d="M1046.24 359.8v5M1046.24 371.8v5M1037.74 368.3h5M1049.74 368.3h5"/></g><g fill="none" stroke="#a99674" stroke-width="1"><circle cx="1046.24" cy="368.3" r="3.600"/><circle cx="1046.24" cy="368.3" r="1.200"/><path d="M1046.24 359.8v5M1046.24 371.8v5M1037.74 368.3h5M1049.74 368.3h5"/></g><rect x="978.84" y="250.00" width="8" height="8" fill="#000" fill-opacity="0.220"/><rect x="977.84" y="249.00" width="8" height="8" fill="#a99674"/><rect x="978.84" y="365.50" width="8" height="8" fill="#000" fill-opacity="0.220"/><rect x="977.84" y="364.50" width="8" height="8" fill="#a99674"/><rect x="978.84" y="480.80" width="8" height="8" fill="#000" fill-opacity="0.220"/><rect x="977.84" y="479.80" width="8" height="8" fill="#a99674"/><rect x="1043.74" y="250.00" width="8" height="8" fill="#000" fill-opacity="0.220"/><rect x="1042.74" y="249.00" width="8" height="8" fill="#a99674"/><rect x="1043.74" y="480.80" width="8" height="8" fill="#000" fill-opacity="0.220"/><rect x="1042.74" y="479.80" width="8" height="8" fill="#a99674"/><rect x="1108.64" y="250.00" width="8" height="8" fill="#000" fill-opacity="0.220"/><rect x="1107.64" y="249.00" width="8" height="8" fill="#a99674"/><rect x="1108.64" y="365.50" width="8" height="8" fill="#000" fill-opacity="0.220"/><rect x="1107.64" y="364.50" width="8" height="8" fill="#a99674"/><rect x="1108.64" y="480.80" width="8" height="8" fill="#000" fill-opacity="0.220"/><rect x="1107.64" y="479.80" width="8" height="8" fill="#a99674"/><g fill="none" stroke="#fff" stroke-opacity="0.750" stroke-width="2.400"><circle cx="1208.52" cy="368.3" r="3.600"/><path d="M1208.52 359.8v5M1208.52 371.8v5M1200.02 368.3h5M1212.02 368.3h5"/></g><g fill="none" stroke="#a99674" stroke-width="1"><circle cx="1208.52" cy="368.3" r="3.600"/><circle cx="1208.52" cy="368.3" r="1.200"/><path d="M1208.52 359.8v5M1208.52 371.8v5M1200.02 368.3h5M1212.02 368.3h5"/></g><rect x="1141.12" y="250.00" width="8" height="8" fill="#000" fill-opacity="0.220"/><rect x="1140.12" y="249.00" width="8" height="8" fill="#a99674"/><rect x="1141.12" y="365.50" width="8" height="8" fill="#000" fill-opacity="0.220"/><rect x="1140.12" y="364.50" width="8" height="8" fill="#a99674"/><rect x="1141.12" y="480.80" width="8" height="8" fill="#000" fill-opacity="0.220"/><rect x="1140.12" y="479.80" width="8" height="8" fill="#a99674"/><rect x="1206.02" y="250.00" width="8" height="8" fill="#000" fill-opacity="0.220"/><rect x="1205.02" y="249.00" width="8" height="8" fill="#a99674"/><rect x="1206.02" y="480.80" width="8" height="8" fill="#000" fill-opacity="0.220"/><rect x="1205.02" y="479.80" width="8" height="8" fill="#a99674"/><rect x="1270.92" y="250.00" width="8" height="8" fill="#000" fill-opacity="0.220"/><rect x="1269.92" y="249.00" width="8" height="8" fill="#a99674"/><rect x="1270.92" y="365.50" width="8" height="8" fill="#000" fill-opacity="0.220"/><rect x="1269.92" y="364.50" width="8" height="8" fill="#a99674"/><rect x="1270.92" y="480.80" width="8" height="8" fill="#000" fill-opacity="0.220"/><rect x="1269.92" y="479.80" width="8" height="8" fill="#a99674"/><g fill="none" stroke="#fff" stroke-opacity="0.750" stroke-width="2.400"><circle cx="1370.80" cy="368.3" r="3.600"/><path d="M1370.80 359.8v5M1370.80 371.8v5M1362.30 368.3h5M1374.30 368.3h5"/></g><g fill="none" stroke="#a99674" stroke-width="1"><circle cx="1370.80" cy="368.3" r="3.600"/><circle cx="1370.80" cy="368.3" r="1.200"/><path d="M1370.80 359.8v5M1370.80 371.8v5M1362.30 368.3h5M1374.30 368.3h5"/></g><rect x="1303.40" y="250.00" width="8" height="8" fill="#000" fill-opacity="0.220"/><rect x="1302.40" y="249.00" width="8" height="8" fill="#a99674"/><rect x="1303.40" y="365.50" width="8" height="8" fill="#000" fill-opacity="0.220"/><rect x="1302.40" y="364.50" width="8" height="8" fill="#a99674"/><rect x="1303.40" y="480.80" width="8" height="8" fill="#000" fill-opacity="0.220"/><rect x="1302.40" y="479.80" width="8" height="8" fill="#a99674"/><rect x="1368.30" y="250.00" width="8" height="8" fill="#000" fill-opacity="0.220"/><rect x="1367.30" y="249.00" width="8" height="8" fill="#a99674"/><rect x="1368.30" y="480.80" width="8" height="8" fill="#000" fill-opacity="0.220"/><rect x="1367.30" y="479.80" width="8" height="8" fill="#a99674"/><rect x="1433.20" y="250.00" width="8" height="8" fill="#000" fill-opacity="0.220"/><rect x="1432.20" y="249.00" width="8" height="8" fill="#a99674"/><rect x="1433.20" y="365.50" width="8" height="8" fill="#000" fill-opacity="0.220"/><rect x="1432.20" y="364.50" width="8" height="8" fill="#a99674"/><rect x="1433.20" y="480.80" width="8" height="8" fill="#000" fill-opacity="0.220"/><rect x="1432.20" y="479.80" width="8" height="8" fill="#a99674"/></svg>
<div class="a" style="left:333px;top:609px;width:1262px;height:1px;background:#1b1b1b;"></div>
<div class="a" style="left:338.3px;top:611px;width:69px;height:18.5px;background:#1f1f1f;border:1px solid #343434;border-radius:2px;"></div>
<div class="t" style="left:345.20px;top:614px;font-size:11px;line-height:12px;color:#b4b4b4;letter-spacing:-0.547px;">33.3%</div>
<svg style="left:394.5px;top:617px;" width="9" height="6" viewBox="0 0 9 6"><path d="M0.800 0.800l3.500 3.500 3.500-3.500" fill="none" stroke="#b4b4b4" stroke-width="1.200"/></svg>
<div class="a" style="left:412.5px;top:612px;width:1.5px;height:17px;background:#303030;"></div>
<div class="a" style="left:418.3px;top:611px;width:86px;height:18.5px;background:#1f1f1f;border:1px solid #343434;border-radius:2px;"></div>
<div class="t" style="left:426.00px;top:614px;font-size:11px;line-height:12px;color:#b4b4b4;letter-spacing:0.086px;">(Third)</div>
<svg style="left:491px;top:617px;" width="9" height="6" viewBox="0 0 9 6"><path d="M0.800 0.800l3.500 3.500 3.500-3.500" fill="none" stroke="#b4b4b4" stroke-width="1.200"/></svg>
<div class="a" style="left:509.5px;top:612px;width:1.5px;height:17px;background:#303030;"></div>
<svg style="left:0px;top:0px;" width="1000" height="640" viewBox="0 0 1000 640"><rect x="515.500" y="611.500" width="21" height="18.500" rx="2" fill="#1a1a1a"/><path d="M528 625.800h-8.300v-11h13v7.500" fill="none" stroke="#b8b8b8" stroke-width="1.300"/><path d="M527.600 616.200l-3.800 4.600h2.400l-1.400 3.800 4.200-5h-2.400z" fill="#b8b8b8"/><path d="M528.800 623.600h4.600l-2.300 2.500z" fill="#b8b8b8"/><rect x="541" y="614.800" width="14.400" height="11.500" fill="#a4a4a4"/><rect x="542.2" y="616.1" width="3" height="3" fill="#2c2c2c"/><rect x="545.2" y="616.1" width="3" height="3" fill="#6a6a6a"/><rect x="548.2" y="616.1" width="3" height="3" fill="#2c2c2c"/><rect x="551.2" y="616.1" width="3" height="3" fill="#6a6a6a"/><rect x="542.2" y="619.1" width="3" height="3" fill="#6a6a6a"/><rect x="545.2" y="619.1" width="3" height="3" fill="#2c2c2c"/><rect x="548.2" y="619.1" width="3" height="3" fill="#6a6a6a"/><rect x="551.2" y="619.1" width="3" height="3" fill="#2c2c2c"/><rect x="542.2" y="622.1" width="3" height="3" fill="#2c2c2c"/><rect x="545.2" y="622.1" width="3" height="3" fill="#6a6a6a"/><rect x="548.2" y="622.1" width="3" height="3" fill="#2c2c2c"/><rect x="551.2" y="622.1" width="3" height="3" fill="#6a6a6a"/><rect x="559.800" y="611.500" width="20.300" height="18.500" rx="2" fill="#1a1a1a" stroke="#2c2c2c"/><path d="M564.200 625l4.700-10.200h7.700v10.200z" fill="none" stroke="#2d8ceb" stroke-width="1.300"/><g fill="#2d8ceb"><rect x="563.100" y="623.900" width="2.200" height="2.200"/><rect x="567.800" y="613.700" width="2.200" height="2.200"/><rect x="575.500" y="613.700" width="2.200" height="2.200"/><rect x="575.500" y="623.900" width="2.200" height="2.200"/><rect x="575.700" y="618.900" width="1.800" height="1.800"/></g><rect x="585.800" y="615" width="12.700" height="10.500" fill="none" stroke="#b8b8b8" stroke-width="1.300"/><rect x="589" y="618" width="6.500" height="4.800" fill="#b8b8b8"/><rect x="607.800" y="615.300" width="11.700" height="7.600" fill="none" stroke="#b8b8b8" stroke-width="1.200"/><path d="M613.600 612.600v4.500M613.600 621v4.500M605.600 619h4M617.500 619h4M612 619h3.200M613.600 617.600v2.800" stroke="#b8b8b8" stroke-width="1.100"/><path d="M615.800 625.800h4.600l-2.300 2.500z" fill="#b8b8b8"/><circle cx="645.700" cy="616.600" r="3.100" fill="#f01818"/><circle cx="642.700" cy="621" r="3.100" fill="#18b018"/><circle cx="648.200" cy="621" r="3.100" fill="#3c6cf0"/><path d="M647.800 625.800h4.600l-2.300 2.500z" fill="#b8b8b8"/><circle cx="668" cy="620" r="5.900" fill="#b4b4b4"/><path d="M668 617.400l2.300 1.300v2.600l-2.300 1.300-2.300-1.300v-2.600z" fill="#232323"/><path d="M668 617.400l3.800-2.600M670.300 618.700l3.700 1.800M670.300 621.300l-0.500 4.500M668 622.600l-3.800 2.600M665.700 621.300l-3.700-1.800M665.700 618.700l0.500-4.500" stroke="#232323" stroke-width="0.900"/><path d="M726.800 617h3.200l1.200-1.800h5.600l1.200 1.800h3.300v9h-14.500z" fill="#b8b8b8"/><circle cx="734" cy="621.300" r="2.700" fill="#232323"/><circle cx="734" cy="621.300" r="1.300" fill="#b8b8b8"/><path d="M748.500 622c2.500-4 9-4 11.500 0c-2.500 4-9 4-11.500 0z" fill="#3c3c3c"/><circle cx="754.200" cy="622" r="1.800" fill="#232323"/><rect x="757" y="614.500" width="6" height="4.200" rx="0.800" fill="#3c3c3c"/><circle cx="760" cy="616.600" r="1" fill="#232323"/></svg>
<div class="a" style="left:628.8px;top:612px;width:1.5px;height:17px;background:#303030;"></div>
<div class="t" style="left:681.00px;top:614px;font-size:11px;line-height:12px;color:#2d8ceb;letter-spacing:-0.305px;">+0,0</div>
<div class="a" style="left:716.9px;top:612px;width:1.5px;height:17px;background:#303030;"></div>
<div class="a" style="left:771.5px;top:612px;width:1.5px;height:17px;background:#303030;"></div>
<div class="a" style="left:777px;top:611px;width:70px;height:18.5px;background:#1f1f1f;border:1px solid #343434;border-radius:2px;"></div>
<div class="t" style="left:786.00px;top:614px;font-size:11px;line-height:12px;color:#b4b4b4;letter-spacing:-0.110px;">0:00:00:00</div>
<div class="a" style="left:852.0px;top:612px;width:1.5px;height:17px;background:#303030;"></div>
<!-- right -->
<div class="a" style="left:1599px;top:78px;width:313px;height:56px;background:#232323;"></div>
<div class="t" style="left:1612.00px;top:86px;font-size:11px;line-height:12px;color:#d6d6d6;letter-spacing:0.246px;">Preview</div>
<div class="ham" style="left:1663.5px;top:88.5px;width:8.500px;border-color:#b8b8b8"></div>
<svg style="left:0px;top:0px;" width="1920" height="140" viewBox="0 0 1920 140"><g fill="#b8b8b8"><rect x="1645.500" y="115.200" width="2" height="9"/><path d="M1658.300 115.200v9l-9-4.500z"/><path d="M1677.600 115.200v9l-9-4.500z"/><rect x="1679.400" y="115.200" width="2" height="9"/><path d="M1694.800 115v9.400l9.500-4.700z"/><rect x="1717.500" y="115.200" width="2" height="9"/><path d="M1721.300 115.200v9l9-4.500z"/><path d="M1741.600 115.200v9l9-4.500z"/><rect x="1752.500" y="115.200" width="2" height="9"/></g></svg>
<div class="a" style="left:1599px;top:138px;width:313px;height:886px;background:#232323;"></div>
<div class="a" style="left:1899px;top:138px;width:11px;height:886px;background:#282828;"></div>
<div class="a" style="left:1900px;top:140px;width:10px;height:586px;background:#353535;border-radius:5px;"></div>
<div class="t" style="left:1612.00px;top:146px;font-size:11px;line-height:12px;color:#d6d6d6;letter-spacing:0.054px;">Properties: 6 layers selected</div>
<div class="ham" style="left:1879.5px;top:149px;width:8.500px;border-color:#b8b8b8"></div>
<div class="t" style="left:1611.40px;top:170px;font-size:11px;line-height:12px;color:#a4a4a4;letter-spacing:0.302px;">Layer Transform</div>
<div class="t" style="left:1752.30px;top:170px;font-size:11px;line-height:12px;color:#2d8ceb;letter-spacing:-0.409px;">Reset</div>
<div class="t" style="left:1659.00px;top:190px;font-size:11px;line-height:12px;color:#a4a4a4;letter-spacing:-0.016px;">Anchor Point</div>
<div class="a" style="left:1749px;top:204px;width:39px;height:1px;background:#3c3c3c;"></div>
<div class="a" style="left:1799.3px;top:204px;width:39px;height:1px;background:#3c3c3c;"></div>
<div class="t" style="left:1659.00px;top:210px;font-size:11px;line-height:12px;color:#a4a4a4;letter-spacing:0.124px;">Position</div>
<div class="a" style="left:1749px;top:224px;width:39px;height:1px;background:#3c3c3c;"></div>
<div class="a" style="left:1799.3px;top:224px;width:39px;height:1px;background:#3c3c3c;"></div>
<div class="t" style="left:1659.00px;top:230px;font-size:11px;line-height:12px;color:#a4a4a4;letter-spacing:-0.479px;">Scale</div>
<div class="a" style="left:1749px;top:244px;width:39px;height:1px;background:#3c3c3c;"></div>
<div class="a" style="left:1799.3px;top:244px;width:39px;height:1px;background:#3c3c3c;"></div>
<div class="t" style="left:1659.00px;top:250px;font-size:11px;line-height:12px;color:#a4a4a4;letter-spacing:0.147px;">Rotation</div>
<div class="a" style="left:1749px;top:264px;width:39px;height:1px;background:#3c3c3c;"></div>
<div class="t" style="left:1659.00px;top:270px;font-size:11px;line-height:12px;color:#a4a4a4;letter-spacing:-0.015px;">Opacity</div>
<div class="a" style="left:1749px;top:284px;width:39px;height:1px;background:#3c3c3c;"></div>
<svg style="left:0px;top:0px;" width="1920" height="300" viewBox="0 0 1920 300"><circle cx="1628.500" cy="197" r="5" fill="none" stroke="#c0c0c0" stroke-width="1.300"/><path d="M1627 189.7h3M1628.500 190v2M1632.300 192.4l1.200-1.200" stroke="#c0c0c0" stroke-width="1.300" fill="none"/><circle cx="1628.500" cy="217" r="5" fill="none" stroke="#c0c0c0" stroke-width="1.300"/><path d="M1627 209.7h3M1628.500 210v2M1632.300 212.4l1.200-1.200" stroke="#c0c0c0" stroke-width="1.300" fill="none"/><circle cx="1628.500" cy="237" r="5" fill="none" stroke="#c0c0c0" stroke-width="1.300"/><path d="M1627 229.7h3M1628.500 230v2M1632.300 232.4l1.200-1.200" stroke="#c0c0c0" stroke-width="1.300" fill="none"/><circle cx="1628.500" cy="257" r="5" fill="none" stroke="#c0c0c0" stroke-width="1.300"/><path d="M1627 249.7h3M1628.500 250v2M1632.300 252.4l1.200-1.200" stroke="#c0c0c0" stroke-width="1.300" fill="none"/><circle cx="1628.500" cy="277" r="5" fill="none" stroke="#c0c0c0" stroke-width="1.300"/><path d="M1627 269.7h3M1628.500 270v2M1632.300 272.4l1.200-1.200" stroke="#c0c0c0" stroke-width="1.300" fill="none"/><g fill="none" stroke="#2d8ceb" stroke-width="1.500"><rect x="1727.500" y="233" width="7" height="5.600" rx="2.800"/><rect x="1732.500" y="233" width="7" height="5.600" rx="2.800"/></g></svg>
<div class="t" style="left:1750.60px;top:189px;font-size:11px;line-height:12px;color:#2d8ceb;letter-spacing:-0.076px;">540</div>
<div class="t" style="left:1800.80px;top:189px;font-size:11px;line-height:12px;color:#2d8ceb;letter-spacing:-0.076px;">960</div>
<div class="t" style="left:1752.80px;top:209px;font-size:11px;line-height:12px;color:#2d8ceb;">–</div>
<div class="t" style="left:1800.80px;top:209px;font-size:11px;line-height:12px;color:#2d8ceb;letter-spacing:-0.076px;">540</div>
<div class="t" style="left:1750.60px;top:229px;font-size:11px;line-height:12px;color:#2d8ceb;letter-spacing:-0.234px;">36</div>
<div class="t" style="left:1765.60px;top:229px;font-size:10.5px;line-height:12px;color:#a4a4a4;">%</div>
<div class="t" style="left:1800.80px;top:229px;font-size:11px;line-height:12px;color:#2d8ceb;letter-spacing:-0.234px;">36</div>
<div class="t" style="left:1815.80px;top:229px;font-size:10.5px;line-height:12px;color:#a4a4a4;">%</div>
<div class="t" style="left:1750.60px;top:249px;font-size:11px;line-height:12px;color:#2d8ceb;">0</div>
<div class="t" style="left:1759.20px;top:249px;font-size:10.5px;line-height:12px;color:#a4a4a4;">x</div>
<div class="t" style="left:1764.70px;top:249px;font-size:11px;line-height:12px;color:#2d8ceb;letter-spacing:-0.341px;">+0</div>
<div class="t" style="left:1779.00px;top:249px;font-size:10.5px;line-height:12px;color:#a4a4a4;">°</div>
<div class="t" style="left:1750.60px;top:269px;font-size:11px;line-height:12px;color:#2d8ceb;letter-spacing:-0.076px;">100</div>
<div class="t" style="left:1772.00px;top:269px;font-size:10.5px;line-height:12px;color:#a4a4a4;">%</div>
<div class="a" style="left:1599px;top:300.5px;width:299px;height:2px;background:#191919;"></div>
<div class="t" style="left:1612.00px;top:311px;font-size:11px;line-height:12px;color:#d6d6d6;letter-spacing:0.235px;">Align</div>
<div class="ham" style="left:1879.5px;top:314px;width:8.500px;border-color:#b8b8b8"></div>
<div class="t" style="left:1606.40px;top:337px;font-size:11px;line-height:12px;color:#a4a4a4;letter-spacing:0.019px;">Align Layers to:</div>
<div class="a" style="left:1692.5px;top:334px;width:110px;height:17.5px;background:#1c1c1c;border:1px solid #363636;border-radius:2px;"></div>
<div class="t" style="left:1700.00px;top:337px;font-size:11px;line-height:12px;color:#d6d6d6;letter-spacing:0.086px;">Composition</div>
<svg style="left:1789px;top:341px;" width="9" height="6" viewBox="0 0 9 6"><path d="M0.800 0.800l3.300 3.300 3.300-3.300" fill="none" stroke="#c0c0c0" stroke-width="1.200"/></svg>
<svg style="left:0px;top:0px;" width="1920" height="430" viewBox="0 0 1920 430"><g fill="#b8b8b8"><rect x="1611.0" y="358" width="1.0" height="18.0"/><rect x="1613.2" y="360.2" width="7.8" height="4.9"/><rect x="1613.2" y="368.2" width="12.8" height="4.6"/><rect x="1652.0" y="358" width="1.0" height="18.0"/><rect x="1648.1" y="360.2" width="8.9" height="4.9"/><rect x="1645.9" y="368.2" width="13.2" height="4.6"/><rect x="1694.1" y="358" width="1.0" height="18.0"/><rect x="1685.3" y="360.2" width="7.7" height="4.9"/><rect x="1680" y="368.2" width="13.0" height="4.6"/><rect x="1712.1" y="358.9000000000001" width="18.1" height="1.0"/><rect x="1714.8" y="361.3" width="5.0" height="12.6"/><rect x="1722.5" y="361.3" width="5.5" height="7.7"/><rect x="1746" y="365.9" width="17.8" height="1.0"/><rect x="1749.3" y="360.2" width="4.4" height="12.6"/><rect x="1756.4" y="362.4" width="5.5" height="8.4"/><rect x="1780" y="373.9" width="18.0" height="1.0"/><rect x="1783.2" y="360.2" width="4.9" height="12.6"/><rect x="1789.8" y="365.1" width="6.2" height="7.7"/><rect x="1610" y="402.0" width="18.0" height="1.0"/><rect x="1615.1" y="404.5" width="7.9" height="3.3"/><rect x="1610" y="411.1" width="18.0" height="1.0"/><rect x="1613" y="413.2" width="12.0" height="4.8"/><rect x="1644" y="405.1" width="18.0" height="1.0"/><rect x="1649.2" y="403.4" width="7.7" height="4.4"/><rect x="1644" y="414.1" width="18.0" height="1.0"/><rect x="1647" y="412.4" width="12.1" height="4.7"/><rect x="1683.1" y="402.3" width="7.7" height="3.5"/><rect x="1678" y="407.0" width="18.0" height="1.0"/><rect x="1680.9" y="411" width="12.1" height="5.0"/><rect x="1678" y="416.9" width="18.0" height="1.0"/><rect x="1712.9" y="401" width="1.0" height="18.0"/><rect x="1715.4" y="404.3" width="4.6" height="11.5"/><rect x="1723.1" y="401" width="1.0" height="18.0"/><rect x="1725.3" y="405.9" width="3.7" height="7.9"/><rect x="1749.9" y="401" width="1.0" height="18.0"/><rect x="1748" y="404.3" width="4.8" height="11.5"/><rect x="1759.2" y="401" width="1.0" height="18.0"/><rect x="1757.3" y="405.9" width="4.7" height="7.9"/><rect x="1781" y="404.3" width="4.8" height="11.5"/><rect x="1787.1" y="401" width="1.0" height="18.0"/><rect x="1791.2" y="405.9" width="3.8" height="7.9"/><rect x="1796.0" y="401" width="1.0" height="18.0"/></g></svg>
<div class="a" style="left:1605px;top:380px;width:195px;height:2px;background:#323232;"></div>
<div class="t" style="left:1606.40px;top:385px;font-size:11px;line-height:12px;color:#a4a4a4;letter-spacing:0.095px;">Distribute Layers:</div>
<div class="a" style="left:1599px;top:429.5px;width:299px;height:2px;background:#191919;"></div>
<div class="t" style="left:1612.00px;top:440px;font-size:11px;line-height:12px;color:#a4a4a4;letter-spacing:0.017px;">Audio</div>
<div class="a" style="left:1599px;top:459px;width:299px;height:2px;background:#191919;"></div>
<div class="t" style="left:1612.00px;top:470px;font-size:11px;line-height:12px;color:#d6d6d6;letter-spacing:-0.092px;">Effects &amp; Presets</div>
<div class="ham" style="left:1879.5px;top:472.5px;width:8.500px;border-color:#b8b8b8"></div>
<div class="a" style="left:1604.3px;top:492.3px;width:289px;height:19px;background:#141414;border:1px solid #323232;border-radius:3px;"></div>
<div class="t" style="left:1633.40px;top:496px;font-size:11px;line-height:12px;color:#d0d0d0;letter-spacing:-0.464px;">cc cy</div>
<div class="a" style="left:1599px;top:515px;width:299px;height:16px;background:#262626;"></div>
<div class="t" style="left:1616.30px;top:517px;font-size:11px;line-height:12px;color:#b4b4b4;letter-spacing:-0.007px;">Perspective</div>
<div class="a" style="left:1599px;top:532.5px;width:299px;height:16px;background:#343434;"></div>
<div class="a" style="left:1650px;top:533.2px;width:69px;height:13.6px;background:#a9a9a9;"></div>
<div class="t" style="left:1653.40px;top:534px;font-size:11px;line-height:12px;color:#1e1e1e;letter-spacing:-0.169px;">CC Cylinder</div>
<div class="a" style="left:1599px;top:548.6px;width:299px;height:1.5px;background:#050505;"></div>
<div class="a" style="left:1897px;top:549px;width:1.3px;height:17px;background:#050505;"></div>
<svg style="left:0px;top:0px;" width="1920" height="570" viewBox="0 0 1920 570"><circle cx="1618.800" cy="500.200" r="3.500" fill="none" stroke="#2d8ceb" stroke-width="1.300"/><path d="M1616.400 503l-5 5" stroke="#2d8ceb" stroke-width="1.500"/><path d="M1623.300 503.600h4.800l-2.400 2.500z" fill="#2d8ceb"/><path d="M1882 499.500l7 7M1889 499.500l-7 7" stroke="#d0d0d0" stroke-width="1.500"/><path d="M1607 523l2.800 2.800 2.800-2.800" fill="none" stroke="#b0b0b0" stroke-width="1.200"/><rect x="1634" y="535.500" width="12" height="10.500" rx="1" fill="#c8c8c8"/><rect x="1635.500" y="534.500" width="2" height="2" fill="#c8c8c8"/><rect x="1642.500" y="534.500" width="2" height="2" fill="#c8c8c8"/><path d="M1879 552.500h12v11.500h-6.500v-5.500h-5.500z" fill="#c0c0c0"/><path d="M1879 559.500h4.500v4.500z" fill="#9a9a9a"/></svg>
<div class="t" style="left:1635.40px;top:537px;font-size:8px;line-height:9px;color:#1c1c1c;font-weight:bold;letter-spacing:-0.400px;">16</div>
<div class="a" style="left:1599px;top:568.5px;width:299px;height:2px;background:#191919;"></div>
<div class="t" style="left:1612.00px;top:579px;font-size:11px;line-height:12px;color:#d6d6d6;letter-spacing:-0.008px;">Paragraph</div>
<div class="ham" style="left:1879.5px;top:581.5px;width:8.500px;border-color:#b8b8b8"></div>
<div class="a" style="left:1605.5px;top:603.2px;width:21px;height:22px;background:#181818;border:1px solid #303030;border-radius:2.500px;"></div>
<svg style="left:0px;top:0px;" width="1920" height="680" viewBox="0 0 1920 680"><rect x="1609" y="607.05" width="12" height="1.100" fill="#2d8ceb"/><rect x="1609" y="610.05" width="15" height="1.100" fill="#2d8ceb"/><rect x="1609" y="612.95" width="12" height="1.100" fill="#2d8ceb"/><rect x="1609" y="616.05" width="15" height="1.100" fill="#2d8ceb"/><rect x="1609" y="618.95" width="12" height="1.100" fill="#2d8ceb"/><rect x="1635" y="607.05" width="12" height="1.100" fill="#c0c0c0"/><rect x="1633" y="610.05" width="16" height="1.100" fill="#c0c0c0"/><rect x="1635" y="612.95" width="12" height="1.100" fill="#c0c0c0"/><rect x="1633" y="616.05" width="16" height="1.100" fill="#c0c0c0"/><rect x="1635" y="618.95" width="12" height="1.100" fill="#c0c0c0"/><rect x="1661" y="607.05" width="12" height="1.100" fill="#c0c0c0"/><rect x="1658" y="610.05" width="15" height="1.100" fill="#c0c0c0"/><rect x="1661" y="612.95" width="12" height="1.100" fill="#c0c0c0"/><rect x="1658" y="616.05" width="15" height="1.100" fill="#c0c0c0"/><rect x="1661" y="618.95" width="12" height="1.100" fill="#c0c0c0"/><rect x="1689" y="607.05" width="14" height="1.100" fill="#c0c0c0"/><rect x="1689" y="610.05" width="14" height="1.100" fill="#c0c0c0"/><rect x="1689" y="612.95" width="14" height="1.100" fill="#c0c0c0"/><rect x="1689" y="616.05" width="14" height="1.100" fill="#c0c0c0"/><rect x="1689" y="618.95" width="10" height="1.100" fill="#c0c0c0"/><rect x="1714" y="607.05" width="14" height="1.100" fill="#c0c0c0"/><rect x="1714" y="610.05" width="14" height="1.100" fill="#c0c0c0"/><rect x="1714" y="612.95" width="14" height="1.100" fill="#c0c0c0"/><rect x="1714" y="616.05" width="14" height="1.100" fill="#c0c0c0"/><rect x="1716" y="618.95" width="10" height="1.100" fill="#c0c0c0"/><rect x="1739" y="607.05" width="14" height="1.100" fill="#c0c0c0"/><rect x="1739" y="610.05" width="14" height="1.100" fill="#c0c0c0"/><rect x="1739" y="612.95" width="14" height="1.100" fill="#c0c0c0"/><rect x="1739" y="616.05" width="14" height="1.100" fill="#c0c0c0"/><rect x="1743" y="618.95" width="10" height="1.100" fill="#c0c0c0"/><rect x="1769" y="607.05" width="14" height="1.100" fill="#c0c0c0"/><rect x="1769" y="610.05" width="14" height="1.100" fill="#c0c0c0"/><rect x="1769" y="612.95" width="14" height="1.100" fill="#c0c0c0"/><rect x="1769" y="616.05" width="14" height="1.100" fill="#c0c0c0"/><rect x="1769" y="618.95" width="14" height="1.100" fill="#c0c0c0"/><rect x="1606" y="640.95" width="6" height="1.100" fill="#c0c0c0"/><path d="M1612 641.5l-3 -2.500v5z" fill="#c0c0c0"/><rect x="1612.95" y="634" width="1.100" height="15" fill="#c0c0c0"/><rect x="1615.5" y="634.95" width="6.5" height="1.100" fill="#c0c0c0"/><rect x="1615.5" y="637.95" width="6.5" height="1.100" fill="#c0c0c0"/><rect x="1615.5" y="640.95" width="6.5" height="1.100" fill="#c0c0c0"/><rect x="1615.5" y="643.95" width="6.5" height="1.100" fill="#c0c0c0"/><rect x="1615.5" y="646.95" width="4.5" height="1.100" fill="#c0c0c0"/><rect x="1677" y="638.15" width="6" height="1.100" fill="#c0c0c0"/><path d="M1683 638.7l-3 -2.500v5z" fill="#c0c0c0"/><rect x="1684.500" y="636.500" width="8.500" height="4.200" fill="none" stroke="#c0c0c0" stroke-width="1.100"/><rect x="1684" y="642.85" width="9" height="1.100" fill="#c0c0c0"/><rect x="1684" y="645.85" width="9" height="1.100" fill="#c0c0c0"/><rect x="1684" y="648.85" width="7" height="1.100" fill="#c0c0c0"/><rect x="1743" y="633.85" width="6" height="1.100" fill="#c0c0c0"/><path d="M1749 634.4l-3 -2.500v5z" fill="#c0c0c0"/><rect x="1752" y="633.85" width="6" height="1.100" fill="#c0c0c0"/><rect x="1749" y="637.05" width="9" height="1.100" fill="#c0c0c0"/><rect x="1749" y="640.15" width="9" height="1.100" fill="#c0c0c0"/><rect x="1749" y="643.05" width="9" height="1.100" fill="#c0c0c0"/><rect x="1749" y="646.05" width="9" height="1.100" fill="#c0c0c0"/><rect x="1606" y="654.55" width="7" height="1.100" fill="#c0c0c0"/><rect x="1606" y="657.45" width="7" height="1.100" fill="#c0c0c0"/><rect x="1606" y="660.45" width="7" height="1.100" fill="#c0c0c0"/><rect x="1606" y="663.45" width="7" height="1.100" fill="#c0c0c0"/><rect x="1606" y="666.95" width="5" height="1.100" fill="#c0c0c0"/><rect x="1613.95" y="654" width="1.100" height="15" fill="#c0c0c0"/><rect x="1616" y="660.45" width="6" height="1.100" fill="#c0c0c0"/><path d="M1616 661l3 -2.500v5z" fill="#c0c0c0"/><rect x="1684" y="654.65" width="9" height="1.100" fill="#c0c0c0"/><rect x="1684" y="657.85" width="9" height="1.100" fill="#c0c0c0"/><rect x="1684" y="660.75" width="9" height="1.100" fill="#c0c0c0"/><rect x="1684.500" y="664.600" width="8.500" height="4.200" fill="none" stroke="#c0c0c0" stroke-width="1.100"/><rect x="1677" y="666.15" width="6" height="1.100" fill="#c0c0c0"/><path d="M1683 666.7l-3 -2.500v5z" fill="#c0c0c0"/><rect x="1742.500" y="654" width="21" height="21.500" rx="2.500" fill="#181818" stroke="#303030"/><path d="M1745 659.200v8.800l5-4.400z" fill="#2d8ceb"/><path d="M1755.7 658h5.300v12h-1.500v-10.600h-1.300v10.600h-1.500v-5.600a3.200 3.200 0 0 1-1-6.400z" fill="#2d8ceb"/><path d="M1770.7 658h5.300v12h-1.500v-10.600h-1.300v10.600h-1.500v-5.600a3.200 3.200 0 0 1-1-6.400z" fill="#c0c0c0"/><path d="M1784 659.200v8.800l-5-4.400z" fill="#c0c0c0"/></svg>
<div class="a" style="left:1606px;top:630px;width:180px;height:1.6px;background:#343434;"></div>
<div class="t" style="left:1626.80px;top:634px;font-size:11px;line-height:12px;color:#2d8ceb;">0</div>
<div class="t" style="left:1637.50px;top:635px;font-size:11px;line-height:12px;color:#a4a4a4;letter-spacing:-0.917px;">px</div>
<div class="t" style="left:1699.90px;top:634px;font-size:11px;line-height:12px;color:#2d8ceb;">0</div>
<div class="t" style="left:1710.50px;top:635px;font-size:11px;line-height:12px;color:#a4a4a4;letter-spacing:-0.917px;">px</div>
<div class="t" style="left:1764.60px;top:634px;font-size:11px;line-height:12px;color:#2d8ceb;">0</div>
<div class="t" style="left:1775.30px;top:635px;font-size:11px;line-height:12px;color:#a4a4a4;letter-spacing:-0.917px;">px</div>
<div class="t" style="left:1626.80px;top:651px;font-size:11px;line-height:12px;color:#2d8ceb;">0</div>
<div class="t" style="left:1637.50px;top:652px;font-size:11px;line-height:12px;color:#a4a4a4;letter-spacing:-0.917px;">px</div>
<div class="t" style="left:1699.90px;top:653px;font-size:11px;line-height:12px;color:#2d8ceb;">0</div>
<div class="t" style="left:1710.50px;top:654px;font-size:11px;line-height:12px;color:#a4a4a4;letter-spacing:-0.917px;">px</div>
<div class="a" style="left:1599px;top:721.5px;width:299px;height:2px;background:#191919;"></div>
<div class="t" style="left:1612.00px;top:732px;font-size:11px;line-height:12px;color:#d6d6d6;letter-spacing:-0.242px;">Brushes</div>
<div class="ham" style="left:1879.5px;top:734.5px;width:8.500px;border-color:#b8b8b8"></div>
<div class="a" style="left:1610.3px;top:762.3px;width:266px;height:99.3px;background:#262626;border:1px solid #0a0a0a;border-right:none;"></div>
<svg style="left:0px;top:0px;" width="1920" height="870" viewBox="0 0 1920 870"><rect x="1640.8" y="763.300" width="1" height="97.300" fill="#2f2f2f"/><rect x="1672.8" y="763.300" width="1" height="97.300" fill="#2f2f2f"/><rect x="1704.8" y="763.300" width="1" height="97.300" fill="#2f2f2f"/><rect x="1736.8" y="763.300" width="1" height="97.300" fill="#2f2f2f"/><rect x="1768.8" y="763.300" width="1" height="97.300" fill="#2f2f2f"/><rect x="1800.8" y="763.300" width="1" height="97.300" fill="#2f2f2f"/><rect x="1832.8" y="763.300" width="1" height="97.300" fill="#2f2f2f"/><rect x="1864.8" y="763.300" width="1" height="97.300" fill="#2f2f2f"/><rect x="1611.300" y="793.0" width="254.700" height="1" fill="#2f2f2f"/><rect x="1611.300" y="825.0" width="254.700" height="1" fill="#2f2f2f"/><rect x="1611.300" y="857.0" width="254.700" height="1" fill="#2f2f2f"/><rect x="1674" y="794" width="31" height="31" fill="#3a3a3a"/><defs><radialGradient id="sb"><stop offset="0" stop-color="#b4b4b4"/><stop offset="0.300" stop-color="#969696" stop-opacity="0.750"/><stop offset="1" stop-color="#808080" stop-opacity="0"/></radialGradient></defs><circle cx="1625.8" cy="772.5" r="0.4" fill="#9a9a9a"/><circle cx="1657.8" cy="772.5" r="0.9" fill="#9a9a9a"/><circle cx="1689.9" cy="772.5" r="2.6" fill="#9a9a9a"/><circle cx="1721.9" cy="772.5" r="4.6" fill="#9a9a9a"/><circle cx="1754.0" cy="772.5" r="6.5" fill="#9a9a9a"/><circle cx="1786.0" cy="772.5" r="6.5" fill="#9a9a9a"/><circle cx="1818.0" cy="772.5" r="2.500" fill="url(#sb)"/><circle cx="1850.1" cy="772.5" r="4.500" fill="url(#sb)"/><circle cx="1625.8" cy="804.5" r="5.800" fill="url(#sb)"/><circle cx="1657.8" cy="804.5" r="5.800" fill="url(#sb)"/><circle cx="1689.9" cy="804.5" r="5.800" fill="url(#sb)"/><circle cx="1721.9" cy="804.5" r="5.800" fill="url(#sb)"/><circle cx="1754.0" cy="804.5" r="5.800" fill="url(#sb)"/><circle cx="1786.0" cy="804.5" r="5.800" fill="url(#sb)"/><circle cx="1818.0" cy="804.5" r="5.800" fill="url(#sb)"/><circle cx="1850.1" cy="804.5" r="5.800" fill="url(#sb)"/><circle cx="1625.8" cy="836.5" r="5.800" fill="url(#sb)"/><circle cx="1657.8" cy="836.5" r="5.800" fill="url(#sb)"/><ellipse cx="1689.9" cy="836.5" rx="5" ry="1.600" fill="url(#sb)" transform="rotate(-25 1689.9 836.5)"/><ellipse cx="1689.9" cy="836.5" rx="3.0" ry="0.800" fill="#b0b0b0" fill-opacity="0.600" transform="rotate(-25 1689.9 836.5)"/><ellipse cx="1721.9" cy="836.5" rx="5" ry="1.600" fill="url(#sb)" transform="rotate(-50 1721.9 836.5)"/><ellipse cx="1721.9" cy="836.5" rx="3.0" ry="0.800" fill="#b0b0b0" fill-opacity="0.600" transform="rotate(-50 1721.9 836.5)"/><ellipse cx="1754.0" cy="836.5" rx="5" ry="1.600" fill="url(#sb)" transform="rotate(-90 1754.0 836.5)"/><ellipse cx="1754.0" cy="836.5" rx="3.0" ry="0.800" fill="#b0b0b0" fill-opacity="0.600" transform="rotate(-90 1754.0 836.5)"/><ellipse cx="1786.0" cy="836.5" rx="6.5" ry="1.600" fill="url(#sb)" transform="rotate(-25 1786.0 836.5)"/><ellipse cx="1786.0" cy="836.5" rx="3.9" ry="0.800" fill="#b0b0b0" fill-opacity="0.600" transform="rotate(-25 1786.0 836.5)"/><ellipse cx="1818.0" cy="836.5" rx="6.5" ry="1.600" fill="url(#sb)" transform="rotate(-50 1818.0 836.5)"/><ellipse cx="1818.0" cy="836.5" rx="3.9" ry="0.800" fill="#b0b0b0" fill-opacity="0.600" transform="rotate(-50 1818.0 836.5)"/><ellipse cx="1850.1" cy="836.5" rx="6.5" ry="1.600" fill="url(#sb)" transform="rotate(-90 1850.1 836.5)"/><ellipse cx="1850.1" cy="836.5" rx="3.9" ry="0.800" fill="#b0b0b0" fill-opacity="0.600" transform="rotate(-90 1850.1 836.5)"/></svg>
<div class="t" style="left:1623.08px;top:781px;font-size:10px;line-height:11px;color:#555;">1</div>
<div class="t" style="left:1655.12px;top:781px;font-size:10px;line-height:11px;color:#555;">3</div>
<div class="t" style="left:1687.16px;top:781px;font-size:10px;line-height:11px;color:#555;">5</div>
<div class="t" style="left:1719.20px;top:781px;font-size:10px;line-height:11px;color:#555;">9</div>
<div class="t" style="left:1748.51px;top:781px;font-size:10px;line-height:11px;color:#555;letter-spacing:-0.222px;">13</div>
<div class="t" style="left:1780.55px;top:781px;font-size:10px;line-height:11px;color:#555;letter-spacing:-0.222px;">19</div>
<div class="t" style="left:1815.32px;top:781px;font-size:10px;line-height:11px;color:#555;">5</div>
<div class="t" style="left:1847.36px;top:781px;font-size:10px;line-height:11px;color:#555;">9</div>
<div class="t" style="left:1620.35px;top:813px;font-size:10px;line-height:11px;color:#555;letter-spacing:-0.222px;">13</div>
<div class="t" style="left:1652.39px;top:813px;font-size:10px;line-height:11px;color:#555;letter-spacing:-0.222px;">17</div>
<div class="t" style="left:1684.43px;top:813px;font-size:10px;line-height:11px;color:#555;letter-spacing:-0.222px;">21</div>
<div class="t" style="left:1716.47px;top:813px;font-size:10px;line-height:11px;color:#555;letter-spacing:-0.222px;">27</div>
<div class="t" style="left:1748.51px;top:813px;font-size:10px;line-height:11px;color:#555;letter-spacing:-0.222px;">35</div>
<div class="t" style="left:1780.55px;top:813px;font-size:10px;line-height:11px;color:#555;letter-spacing:-0.222px;">45</div>
<div class="t" style="left:1812.59px;top:813px;font-size:10px;line-height:11px;color:#555;letter-spacing:-0.222px;">65</div>
<div class="t" style="left:1841.91px;top:813px;font-size:10px;line-height:11px;color:#555;letter-spacing:-0.167px;">100</div>
<div class="t" style="left:1617.63px;top:845px;font-size:10px;line-height:11px;color:#555;letter-spacing:-0.167px;">200</div>
<div class="t" style="left:1649.67px;top:845px;font-size:10px;line-height:11px;color:#555;letter-spacing:-0.167px;">300</div>
<div class="t" style="left:1684.79px;top:845px;font-size:10px;line-height:11px;color:#555;letter-spacing:-0.208px;">11</div>
<div class="t" style="left:1716.83px;top:845px;font-size:10px;line-height:11px;color:#555;letter-spacing:-0.208px;">11</div>
<div class="t" style="left:1748.87px;top:845px;font-size:10px;line-height:11px;color:#555;letter-spacing:-0.208px;">11</div>
<div class="t" style="left:1780.55px;top:845px;font-size:10px;line-height:11px;color:#555;letter-spacing:-0.222px;">45</div>
<div class="t" style="left:1812.59px;top:845px;font-size:10px;line-height:11px;color:#555;letter-spacing:-0.222px;">45</div>
<div class="t" style="left:1844.63px;top:845px;font-size:10px;line-height:11px;color:#555;letter-spacing:-0.222px;">45</div>
<div class="t" style="left:1635.40px;top:870px;font-size:11px;line-height:12px;color:#4e4e4e;letter-spacing:0.165px;">Diameter:</div>
<div class="t" style="left:1690.20px;top:870px;font-size:11px;line-height:12px;color:#4e4e4e;letter-spacing:0.048px;">21 px</div>
<div class="t" style="left:1655.00px;top:889px;font-size:11px;line-height:12px;color:#4e4e4e;letter-spacing:-0.358px;">Angle:</div>
<div class="t" style="left:1690.20px;top:889px;font-size:11px;line-height:12px;color:#4e4e4e;letter-spacing:-0.086px;">0 °</div>
<div class="t" style="left:1629.30px;top:909px;font-size:11px;line-height:12px;color:#4e4e4e;letter-spacing:-0.400px;">Roundness:</div>
<div class="t" style="left:1690.20px;top:909px;font-size:11px;line-height:12px;color:#4e4e4e;letter-spacing:-0.097px;">100 %</div>
<div class="t" style="left:1636.30px;top:928px;font-size:11px;line-height:12px;color:#4e4e4e;letter-spacing:-0.254px;">Hardness:</div>
<div class="t" style="left:1690.20px;top:928px;font-size:11px;line-height:12px;color:#4e4e4e;letter-spacing:0.123px;">0 %</div>
<div class="t" style="left:1643.30px;top:947px;font-size:11px;line-height:12px;color:#4e4e4e;letter-spacing:-0.372px;">Spacing:</div>
<div class="t" style="left:1690.20px;top:947px;font-size:11px;line-height:12px;color:#4e4e4e;letter-spacing:0.009px;">25 %</div>
<div class="a" style="left:1625px;top:946px;width:14px;height:13.5px;background:#3c3c3c;border-radius:2px;"></div>
<div class="t" style="left:1611.30px;top:972px;font-size:11px;line-height:12px;color:#4e4e4e;letter-spacing:-0.067px;">Brush Dynamics</div>
<div class="a" style="left:1699.2px;top:978px;width:102.7px;height:2px;background:#303030;"></div>
<div class="t" style="left:1662.20px;top:993px;font-size:11px;line-height:12px;color:#4e4e4e;letter-spacing:-0.564px;">Size:</div>
<div class="a" style="left:1690px;top:991.2px;width:105px;height:19px;background:#2b2b2b;border-radius:3px;"></div>
<div class="t" style="left:1698.40px;top:993px;font-size:11px;line-height:12px;color:#4e4e4e;letter-spacing:-0.213px;">Pen Pressure</div>
<div class="t" style="left:1612.40px;top:1012px;font-size:11px;line-height:12px;color:#4e4e4e;letter-spacing:0.065px;">Minimum Size:</div>
<div class="t" style="left:1690.20px;top:1012px;font-size:11px;line-height:12px;color:#4e4e4e;letter-spacing:0.573px;">1 %</div>
<svg style="left:0px;top:0px;" width="1920" height="1030" viewBox="0 0 1920 1030"><path d="M1628 952.500l3 3 5.500-6" fill="none" stroke="#1e1e1e" stroke-width="1.600"/><rect x="1733.500" y="873.500" width="66.500" height="66.500" fill="#282828" stroke="#0a0a0a"/><defs><radialGradient id="pv"><stop offset="0" stop-color="#c4c4c4"/><stop offset="0.300" stop-color="#9a9a9a" stop-opacity="0.750"/><stop offset="1" stop-color="#808080" stop-opacity="0"/></radialGradient></defs><circle cx="1766.300" cy="906.500" r="8" fill="url(#pv)"/><path d="M1748 949.500h12v11.500h-6.500v-5.500h-5.500z" fill="#3c3c3c"/><path d="M1748 956.500h4.500v4.500z" fill="#333"/><g fill="none" stroke="#3c3c3c" stroke-width="1.100"><path d="M1773 951.500h11M1776.500 951v-1.500h4v1.500"/><path d="M1774.500 952.500v8.500h8v-8.500M1777 954v5.500M1780 954v5.500"/></g><path d="M1781.500 998l3.800 3.800 3.800-3.800" fill="none" stroke="#484848" stroke-width="1.200"/></svg>
<!-- tl -->
<div class="a" style="left:9px;top:636px;width:1586px;height:387px;background:#232323;border:1px solid #2d8ceb;border-bottom-left-radius:7px;"></div>
<div class="a" style="left:35px;top:644px;width:10px;height:10px;background:#b49f7c;"></div>
<div class="t" style="left:57.20px;top:644px;font-size:11px;line-height:12px;color:#8e8e8e;letter-spacing:0.095px;">Main Comp</div>
<svg style="left:154.5px;top:647.5px;" width="7" height="7" viewBox="0 0 7 7"><path d="M1 1l4.500 4.500M5.500 1l-4.500 4.500" stroke="#8c8c8c" stroke-width="1.100"/></svg>
<div class="a" style="left:170px;top:644px;width:10px;height:10px;background:#b49f7c;"></div>
<div class="t" style="left:192.10px;top:644px;font-size:11px;line-height:12px;color:#d6d6d6;letter-spacing:-0.032px;">Wide Comp</div>
<div class="ham" style="left:261px;top:647px;width:8.500px"></div><div class="a" style="left:258px;top:660px;width:11.5px;height:2px;background:#d0d0d0;"></div>
<div class="a" style="left:152px;top:637.3px;width:107px;height:25.5px;background:transparent;border:3px solid #b6e61e;"></div>
<div class="t" style="left:25.10px;top:668px;font-size:13px;line-height:15px;color:#2d8ceb;font-weight:bold;letter-spacing:1.100px;">0:00:00:00</div>
<div class="t" style="left:19.80px;top:684px;font-size:11px;line-height:12px;color:#1f5c99;letter-spacing:-0.295px;">00000 (30.00 fps)</div>
<div class="a" style="left:115.5px;top:671.5px;width:259px;height:19px;background:#161616;border:1px solid #2c2c2c;border-radius:3px;"></div>
<div class="a" style="left:10px;top:699px;width:532px;height:19.5px;background:#262626;"></div>
<div class="a" style="left:76.8px;top:704.5px;width:1.2px;height:10.5px;background:#161616;"></div>
<div class="a" style="left:108.9px;top:704.5px;width:1.2px;height:10.5px;background:#161616;"></div>
<div class="a" style="left:142.1px;top:704.5px;width:1.2px;height:10.5px;background:#161616;"></div>
<div class="a" style="left:271.9px;top:704.5px;width:1.2px;height:10.5px;background:#161616;"></div>
<div class="a" style="left:409.0px;top:704.5px;width:1.2px;height:10.5px;background:#161616;"></div>
<div class="a" style="left:525.8px;top:704.5px;width:1.2px;height:10.5px;background:#161616;"></div>
<div class="t" style="left:115.20px;top:705px;font-size:9px;line-height:10px;color:#a8a8a8;">#</div>
<div class="t" style="left:147.60px;top:704px;font-size:9.5px;line-height:11px;color:#a8a8a8;letter-spacing:-0.368px;">Source Name</div>
<div class="t" style="left:415.40px;top:704px;font-size:9.5px;line-height:11px;color:#a8a8a8;letter-spacing:-0.286px;">Parent &amp; Link</div>
<div class="a" style="left:10px;top:719px;width:532px;height:16px;background:#4a4a4a;"></div>
<div class="a" style="left:544px;top:719px;width:7px;height:16px;background:#474747;"></div>
<div class="a" style="left:1570px;top:719px;width:7px;height:16px;background:#474747;"></div>
<div class="a" style="left:14px;top:720.5px;width:13px;height:12.5px;background:#3a3a3a;"></div>
<div class="a" style="left:43.7px;top:720.5px;width:13.2px;height:12.5px;background:#3a3a3a;"></div>
<div class="a" style="left:59px;top:720.5px;width:12.8px;height:12.5px;background:#3a3a3a;"></div>
<div class="a" style="left:276.7px;top:720.5px;width:13.3px;height:12.5px;background:#3a3a3a;"></div>
<div class="a" style="left:291.9px;top:720.5px;width:12.7px;height:12.5px;background:#3a3a3a;"></div>
<div class="a" style="left:307px;top:720.5px;width:12.6px;height:12.5px;background:#3a3a3a;"></div>
<div class="a" style="left:352px;top:720.5px;width:12.8px;height:12.5px;background:#3a3a3a;"></div>
<div class="a" style="left:367.2px;top:720.5px;width:12.7px;height:12.5px;background:#3a3a3a;"></div>
<div class="a" style="left:382.1px;top:720.5px;width:12.8px;height:12.5px;background:#3a3a3a;"></div>
<div class="a" style="left:94.8px;top:721px;width:12.4px;height:12px;background:#b49f7c;"></div>
<div class="t" style="left:116.70px;top:720px;font-size:11px;line-height:12px;color:#d0d0d0;">1</div>
<div class="a" style="left:161px;top:719px;width:111px;height:16px;background:#4a4a4a;border:2px solid #a6a6a6;"></div>
<div class="t" style="left:165.50px;top:721px;font-size:11px;line-height:12px;color:#d8d8d8;letter-spacing:-0.110px;">Frame 01</div>
<div class="a" style="left:432.8px;top:720px;width:89.7px;height:13.8px;background:#232323;"></div>
<div class="t" style="left:440.40px;top:721px;font-size:11px;line-height:12px;color:#d0d0d0;letter-spacing:-0.365px;">None</div>
<div class="a" style="left:10px;top:736px;width:532px;height:16px;background:#4a4a4a;"></div>
<div class="a" style="left:544px;top:736px;width:7px;height:16px;background:#474747;"></div>
<div class="a" style="left:1570px;top:736px;width:7px;height:16px;background:#474747;"></div>
<div class="a" style="left:14px;top:737.5px;width:13px;height:12.5px;background:#3a3a3a;"></div>
<div class="a" style="left:43.7px;top:737.5px;width:13.2px;height:12.5px;background:#3a3a3a;"></div>
<div class="a" style="left:59px;top:737.5px;width:12.8px;height:12.5px;background:#3a3a3a;"></div>
<div class="a" style="left:276.7px;top:737.5px;width:13.3px;height:12.5px;background:#3a3a3a;"></div>
<div class="a" style="left:291.9px;top:737.5px;width:12.7px;height:12.5px;background:#3a3a3a;"></div>
<div class="a" style="left:307px;top:737.5px;width:12.6px;height:12.5px;background:#3a3a3a;"></div>
<div class="a" style="left:352px;top:737.5px;width:12.8px;height:12.5px;background:#3a3a3a;"></div>
<div class="a" style="left:367.2px;top:737.5px;width:12.7px;height:12.5px;background:#3a3a3a;"></div>
<div class="a" style="left:382.1px;top:737.5px;width:12.8px;height:12.5px;background:#3a3a3a;"></div>
<div class="a" style="left:94.8px;top:738px;width:12.4px;height:12px;background:#b49f7c;"></div>
<div class="t" style="left:116.70px;top:737px;font-size:11px;line-height:12px;color:#d0d0d0;">2</div>
<div class="a" style="left:161px;top:736px;width:111px;height:16px;background:#4a4a4a;border:2px solid #a6a6a6;"></div>
<div class="t" style="left:165.50px;top:738px;font-size:11px;line-height:12px;color:#d8d8d8;letter-spacing:-0.110px;">Frame 02</div>
<div class="a" style="left:432.8px;top:737px;width:89.7px;height:13.8px;background:#232323;"></div>
<div class="t" style="left:440.40px;top:738px;font-size:11px;line-height:12px;color:#d0d0d0;letter-spacing:-0.365px;">None</div>
<div class="a" style="left:10px;top:753px;width:532px;height:16px;background:#4a4a4a;"></div>
<div class="a" style="left:544px;top:753px;width:7px;height:16px;background:#474747;"></div>
<div class="a" style="left:1570px;top:753px;width:7px;height:16px;background:#474747;"></div>
<div class="a" style="left:14px;top:754.5px;width:13px;height:12.5px;background:#3a3a3a;"></div>
<div class="a" style="left:43.7px;top:754.5px;width:13.2px;height:12.5px;background:#3a3a3a;"></div>
<div class="a" style="left:59px;top:754.5px;width:12.8px;height:12.5px;background:#3a3a3a;"></div>
<div class="a" style="left:276.7px;top:754.5px;width:13.3px;height:12.5px;background:#3a3a3a;"></div>
<div class="a" style="left:291.9px;top:754.5px;width:12.7px;height:12.5px;background:#3a3a3a;"></div>
<div class="a" style="left:307px;top:754.5px;width:12.6px;height:12.5px;background:#3a3a3a;"></div>
<div class="a" style="left:352px;top:754.5px;width:12.8px;height:12.5px;background:#3a3a3a;"></div>
<div class="a" style="left:367.2px;top:754.5px;width:12.7px;height:12.5px;background:#3a3a3a;"></div>
<div class="a" style="left:382.1px;top:754.5px;width:12.8px;height:12.5px;background:#3a3a3a;"></div>
<div class="a" style="left:94.8px;top:755px;width:12.4px;height:12px;background:#b49f7c;"></div>
<div class="t" style="left:116.70px;top:754px;font-size:11px;line-height:12px;color:#d0d0d0;">3</div>
<div class="a" style="left:161px;top:753px;width:111px;height:16px;background:#4a4a4a;border:2px solid #a6a6a6;"></div>
<div class="t" style="left:165.50px;top:755px;font-size:11px;line-height:12px;color:#d8d8d8;letter-spacing:-0.110px;">Frame 03</div>
<div class="a" style="left:432.8px;top:754px;width:89.7px;height:13.8px;background:#232323;"></div>
<div class="t" style="left:440.40px;top:755px;font-size:11px;line-height:12px;color:#d0d0d0;letter-spacing:-0.365px;">None</div>
<div class="a" style="left:10px;top:770px;width:532px;height:16px;background:#4a4a4a;"></div>
<div class="a" style="left:544px;top:770px;width:7px;height:16px;background:#474747;"></div>
<div class="a" style="left:1570px;top:770px;width:7px;height:16px;background:#474747;"></div>
<div class="a" style="left:14px;top:771.5px;width:13px;height:12.5px;background:#3a3a3a;"></div>
<div class="a" style="left:43.7px;top:771.5px;width:13.2px;height:12.5px;background:#3a3a3a;"></div>
<div class="a" style="left:59px;top:771.5px;width:12.8px;height:12.5px;background:#3a3a3a;"></div>
<div class="a" style="left:276.7px;top:771.5px;width:13.3px;height:12.5px;background:#3a3a3a;"></div>
<div class="a" style="left:291.9px;top:771.5px;width:12.7px;height:12.5px;background:#3a3a3a;"></div>
<div class="a" style="left:307px;top:771.5px;width:12.6px;height:12.5px;background:#3a3a3a;"></div>
<div class="a" style="left:352px;top:771.5px;width:12.8px;height:12.5px;background:#3a3a3a;"></div>
<div class="a" style="left:367.2px;top:771.5px;width:12.7px;height:12.5px;background:#3a3a3a;"></div>
<div class="a" style="left:382.1px;top:771.5px;width:12.8px;height:12.5px;background:#3a3a3a;"></div>
<div class="a" style="left:94.8px;top:772px;width:12.4px;height:12px;background:#b49f7c;"></div>
<div class="t" style="left:116.70px;top:771px;font-size:11px;line-height:12px;color:#d0d0d0;">4</div>
<div class="a" style="left:161px;top:770px;width:111px;height:16px;background:#4a4a4a;border:2px solid #a6a6a6;"></div>
<div class="t" style="left:165.50px;top:772px;font-size:11px;line-height:12px;color:#d8d8d8;letter-spacing:-0.110px;">Frame 04</div>
<div class="a" style="left:432.8px;top:771px;width:89.7px;height:13.8px;background:#232323;"></div>
<div class="t" style="left:440.40px;top:772px;font-size:11px;line-height:12px;color:#d0d0d0;letter-spacing:-0.365px;">None</div>
<div class="a" style="left:10px;top:787px;width:532px;height:16px;background:#4a4a4a;"></div>
<div class="a" style="left:544px;top:787px;width:7px;height:16px;background:#474747;"></div>
<div class="a" style="left:1570px;top:787px;width:7px;height:16px;background:#474747;"></div>
<div class="a" style="left:14px;top:788.5px;width:13px;height:12.5px;background:#3a3a3a;"></div>
<div class="a" style="left:43.7px;top:788.5px;width:13.2px;height:12.5px;background:#3a3a3a;"></div>
<div class="a" style="left:59px;top:788.5px;width:12.8px;height:12.5px;background:#3a3a3a;"></div>
<div class="a" style="left:276.7px;top:788.5px;width:13.3px;height:12.5px;background:#3a3a3a;"></div>
<div class="a" style="left:291.9px;top:788.5px;width:12.7px;height:12.5px;background:#3a3a3a;"></div>
<div class="a" style="left:307px;top:788.5px;width:12.6px;height:12.5px;background:#3a3a3a;"></div>
<div class="a" style="left:352px;top:788.5px;width:12.8px;height:12.5px;background:#3a3a3a;"></div>
<div class="a" style="left:367.2px;top:788.5px;width:12.7px;height:12.5px;background:#3a3a3a;"></div>
<div class="a" style="left:382.1px;top:788.5px;width:12.8px;height:12.5px;background:#3a3a3a;"></div>
<div class="a" style="left:94.8px;top:789px;width:12.4px;height:12px;background:#b49f7c;"></div>
<div class="t" style="left:116.70px;top:788px;font-size:11px;line-height:12px;color:#d0d0d0;">5</div>
<div class="a" style="left:161px;top:787px;width:111px;height:16px;background:#4a4a4a;border:2px solid #a6a6a6;"></div>
<div class="t" style="left:165.50px;top:789px;font-size:11px;line-height:12px;color:#d8d8d8;letter-spacing:-0.110px;">Frame 05</div>
<div class="a" style="left:432.8px;top:788px;width:89.7px;height:13.8px;background:#232323;"></div>
<div class="t" style="left:440.40px;top:789px;font-size:11px;line-height:12px;color:#d0d0d0;letter-spacing:-0.365px;">None</div>
<div class="a" style="left:10px;top:804px;width:532px;height:16px;background:#4a4a4a;"></div>
<div class="a" style="left:544px;top:804px;width:7px;height:16px;background:#474747;"></div>
<div class="a" style="left:1570px;top:804px;width:7px;height:16px;background:#474747;"></div>
<div class="a" style="left:14px;top:805.5px;width:13px;height:12.5px;background:#3a3a3a;"></div>
<div class="a" style="left:43.7px;top:805.5px;width:13.2px;height:12.5px;background:#3a3a3a;"></div>
<div class="a" style="left:59px;top:805.5px;width:12.8px;height:12.5px;background:#3a3a3a;"></div>
<div class="a" style="left:276.7px;top:805.5px;width:13.3px;height:12.5px;background:#3a3a3a;"></div>
<div class="a" style="left:291.9px;top:805.5px;width:12.7px;height:12.5px;background:#3a3a3a;"></div>
<div class="a" style="left:307px;top:805.5px;width:12.6px;height:12.5px;background:#3a3a3a;"></div>
<div class="a" style="left:352px;top:805.5px;width:12.8px;height:12.5px;background:#3a3a3a;"></div>
<div class="a" style="left:367.2px;top:805.5px;width:12.7px;height:12.5px;background:#3a3a3a;"></div>
<div class="a" style="left:382.1px;top:805.5px;width:12.8px;height:12.5px;background:#3a3a3a;"></div>
<div class="a" style="left:94.8px;top:806px;width:12.4px;height:12px;background:#b49f7c;"></div>
<div class="t" style="left:116.70px;top:805px;font-size:11px;line-height:12px;color:#d0d0d0;">6</div>
<div class="a" style="left:161px;top:804px;width:111px;height:16px;background:#4a4a4a;border:2px solid #a6a6a6;"></div>
<div class="t" style="left:165.50px;top:806px;font-size:11px;line-height:12px;color:#d8d8d8;letter-spacing:-0.110px;">Frame 06</div>
<div class="a" style="left:432.8px;top:805px;width:89.7px;height:13.8px;background:#232323;"></div>
<div class="t" style="left:440.40px;top:806px;font-size:11px;line-height:12px;color:#d0d0d0;letter-spacing:-0.365px;">None</div>
<div class="a" style="left:541.8px;top:669px;width:1.3px;height:335px;background:#0a0a0a;"></div>
<div class="a" style="left:543.5px;top:821px;width:7px;height:183px;background:#232323;"></div>
<div class="a" style="left:551px;top:821px;width:1019px;height:183px;background:#323232;"></div>
<div class="a" style="left:1570px;top:821px;width:7px;height:183px;background:#282828;"></div>
<div class="a" style="left:543px;top:669px;width:1034.5px;height:9.5px;background:#0e0e0e;"></div>
<div class="a" style="left:549.8px;top:669.8px;width:1020.5px;height:7.8px;background:#686868;"></div>
<div class="a" style="left:543px;top:669.8px;width:6.5px;height:7.8px;background:#2d8ceb;border-radius:4px 0 0 4px;"></div>
<div class="a" style="left:1570.5px;top:669.8px;width:6.5px;height:7.8px;background:#2d8ceb;border-radius:0 4px 4px 0;"></div>
<div class="a" style="left:550px;top:669.8px;width:2px;height:7.8px;background:#5a86c0;"></div>
<div class="a" style="left:543.500px;top:678.500px;width:40px;height:19px;overflow:hidden"><div class="t" style="left:-6.65px;top:2px;font-size:11px;line-height:12px;color:#b4b4b4;letter-spacing:0.408px;">0:00f</div>
</div><div class="t" style="left:598.89px;top:680px;font-size:11px;line-height:12px;color:#b4b4b4;letter-spacing:-0.115px;">10f</div>
<div class="t" style="left:656.21px;top:680px;font-size:11px;line-height:12px;color:#b4b4b4;letter-spacing:-0.115px;">20f</div>
<div class="t" style="left:706.00px;top:680px;font-size:11px;line-height:12px;color:#b4b4b4;letter-spacing:-0.092px;">01:00f</div>
<div class="t" style="left:770.85px;top:680px;font-size:11px;line-height:12px;color:#b4b4b4;letter-spacing:-0.115px;">10f</div>
<div class="t" style="left:828.17px;top:680px;font-size:11px;line-height:12px;color:#b4b4b4;letter-spacing:-0.115px;">20f</div>
<div class="t" style="left:877.96px;top:680px;font-size:11px;line-height:12px;color:#b4b4b4;letter-spacing:-0.092px;">02:00f</div>
<div class="t" style="left:942.81px;top:680px;font-size:11px;line-height:12px;color:#b4b4b4;letter-spacing:-0.115px;">10f</div>
<div class="t" style="left:1000.13px;top:680px;font-size:11px;line-height:12px;color:#b4b4b4;letter-spacing:-0.115px;">20f</div>
<div class="t" style="left:1049.92px;top:680px;font-size:11px;line-height:12px;color:#b4b4b4;letter-spacing:-0.092px;">03:00f</div>
<div class="t" style="left:1114.77px;top:680px;font-size:11px;line-height:12px;color:#b4b4b4;letter-spacing:-0.115px;">10f</div>
<div class="t" style="left:1172.09px;top:680px;font-size:11px;line-height:12px;color:#b4b4b4;letter-spacing:-0.115px;">20f</div>
<div class="t" style="left:1221.88px;top:680px;font-size:11px;line-height:12px;color:#b4b4b4;letter-spacing:-0.092px;">04:00f</div>
<div class="t" style="left:1286.73px;top:680px;font-size:11px;line-height:12px;color:#b4b4b4;letter-spacing:-0.115px;">10f</div>
<div class="t" style="left:1344.05px;top:680px;font-size:11px;line-height:12px;color:#b4b4b4;letter-spacing:-0.115px;">20f</div>
<div class="t" style="left:1393.84px;top:680px;font-size:11px;line-height:12px;color:#b4b4b4;letter-spacing:-0.092px;">05:00f</div>
<div class="t" style="left:1458.69px;top:680px;font-size:11px;line-height:12px;color:#b4b4b4;letter-spacing:-0.115px;">10f</div>
<div class="t" style="left:1516.01px;top:680px;font-size:11px;line-height:12px;color:#b4b4b4;letter-spacing:-0.115px;">20f</div>
<div class="a" style="left:1560px;top:678.500px;width:17px;height:19px;overflow:hidden"><div class="t" style="left:5.50px;top:2px;font-size:11px;line-height:12px;color:#b4b4b4;">06:00f</div>
</div><div class="a" style="left:543px;top:698px;width:1034.5px;height:16.6px;background:#0e0e0e;"></div>
<div class="a" style="left:549.5px;top:698.8px;width:1021px;height:15px;background:#616161;"></div>
<div class="a" style="left:543.5px;top:699.3px;width:6px;height:14.2px;background:#2d8ceb;border-radius:3.500px 0 0 3.500px;"></div>
<div class="a" style="left:1570.5px;top:699.3px;width:6px;height:14.2px;background:#2d8ceb;border-radius:0 3.500px 3.500px 0;"></div>
<div class="a" style="left:551px;top:714.8px;width:1019.2px;height:3.4px;background:#1ec31e;"></div>
<div class="a" style="left:1570.2px;top:714.8px;width:7px;height:3.4px;background:#383838;"></div>
<div class="a" style="left:551px;top:718.8px;width:1019.2px;height:16.2px;background:linear-gradient(#e6dcc8 0,#d2c6aa 0.900px,#a39479 1.700px,#9f9073 4px,#9d8e71 14.800px,#6a5c44 15.600px,#2e2a24 16.200px);"></div>
<div class="a" style="left:551px;top:735.8px;width:1019.2px;height:16.2px;background:linear-gradient(#e6dcc8 0,#d2c6aa 0.900px,#a39479 1.700px,#9f9073 4px,#9d8e71 14.800px,#6a5c44 15.600px,#2e2a24 16.200px);"></div>
<div class="a" style="left:551px;top:752.8px;width:1019.2px;height:16.2px;background:linear-gradient(#e6dcc8 0,#d2c6aa 0.900px,#a39479 1.700px,#9f9073 4px,#9d8e71 14.800px,#6a5c44 15.600px,#2e2a24 16.200px);"></div>
<div class="a" style="left:551px;top:769.8px;width:1019.2px;height:16.2px;background:linear-gradient(#e6dcc8 0,#d2c6aa 0.900px,#a39479 1.700px,#9f9073 4px,#9d8e71 14.800px,#6a5c44 15.600px,#2e2a24 16.200px);"></div>
<div class="a" style="left:551px;top:786.8px;width:1019.2px;height:16.2px;background:linear-gradient(#e6dcc8 0,#d2c6aa 0.900px,#a39479 1.700px,#9f9073 4px,#9d8e71 14.800px,#6a5c44 15.600px,#2e2a24 16.200px);"></div>
<div class="a" style="left:551px;top:803.8px;width:1019.2px;height:16.2px;background:linear-gradient(#e6dcc8 0,#d2c6aa 0.900px,#a39479 1.700px,#9f9073 4px,#9d8e71 14.800px,#6a5c44 15.600px,#2e2a24 16.200px);"></div>
<div class="a" style="left:10px;top:1004.5px;width:640px;height:1px;background:#060606;"></div>
<div class="a" style="left:10px;top:1005.5px;width:640px;height:16.5px;background:#242424;"></div>
<div class="a" style="left:1577px;top:1004px;width:1px;height:18px;background:#141414;"></div>
<div class="a" style="left:14.2px;top:1006.5px;width:16.5px;height:15px;background:#1c1c1c;border:1px solid #343434;border-radius:2px;"></div>
<div class="t" style="left:115.20px;top:1008px;font-size:11px;line-height:12px;color:#b4b4b4;letter-spacing:-0.027px;">Frame Render Time:</div>
<div class="t" style="left:221.30px;top:1008px;font-size:11px;line-height:12px;color:#3fd68f;letter-spacing:-0.190px;">4ms</div>
<div class="a" style="left:274.2px;top:1007.5px;width:135px;height:14px;background:transparent;border:1px solid #383838;border-radius:2px;"></div>
<div class="t" style="left:280.00px;top:1008px;font-size:11px;line-height:12px;color:#a8a8a8;letter-spacing:0.038px;">Toggle Switches / Modes</div>
<svg style="left:0px;top:0px;" width="1920" height="1030" viewBox="0 0 1920 1030"><circle cx="130.300" cy="678.800" r="3.400" fill="none" stroke="#a8a8a8" stroke-width="1.200"/><path d="M128 681.400l-5 5" stroke="#a8a8a8" stroke-width="1.400"/><path d="M134.300 683h4.700l-2.350 2.400z" fill="#a8a8a8"/><g fill="#b8b8b8"><rect x="390.500" y="676.500" width="5" height="2.200" rx="1"/><rect x="400" y="676.500" width="5.500" height="2.500" rx="0.500"/><rect x="400" y="681.500" width="5.500" height="2.500" rx="0.500"/><path d="M403 685.800h4l-2 2.200z"/></g><path d="M395 677.600h3.500M398 677.600v5.200h2.500" fill="none" stroke="#b8b8b8" stroke-width="1"/><rect x="424.500" y="681" width="15.500" height="6" fill="#8a8a8a"/><path d="M427.2 679.8a5 4.300 0 0 1 10 0z" fill="#b8b8b8"/><circle cx="430.4" cy="677.8" r="0.900" fill="#232323"/><circle cx="434.0" cy="677.8" r="0.900" fill="#232323"/><rect x="431.5" y="677.3" width="1.400" height="6.500" fill="#b8b8b8"/><rect x="426.2" y="680.5999999999999" width="4.300" height="1.100" fill="#b8b8b8"/><rect x="433.9" y="680.5999999999999" width="4.300" height="1.100" fill="#b8b8b8"/><rect x="427.2" y="683.0999999999999" width="10" height="1.100" fill="#b8b8b8"/><path d="M451.500 678.500v9h9.500v-1.500" fill="none" stroke="#b8b8b8" stroke-width="1.300"/><rect x="455" y="674.500" width="10" height="11" fill="#b8b8b8"/><rect x="457.500" y="676" width="5" height="8" fill="#4a4a4a"/><path d="M456.200 675.500v9.500M463.800 675.500v9.500" stroke="#232323" stroke-width="0.800" stroke-dasharray="1 1"/><rect x="458" y="679.500" width="4" height="1" fill="#b8b8b8"/><g fill="none" stroke="#b8b8b8" stroke-width="1.200"><ellipse cx="481" cy="684.500" rx="4.300" ry="3.600" transform="rotate(-35 481 684.500)"/><ellipse cx="482.500" cy="683" rx="4.300" ry="3.600" transform="rotate(-35 482.500 683)"/></g><ellipse cx="485.500" cy="680" rx="5.300" ry="4.600" transform="rotate(-35 485.500 680)" fill="#8a8a8a" stroke="#b8b8b8" stroke-width="1.200"/><rect x="510.500" y="675" width="15" height="12.300" fill="none" stroke="#b8b8b8" stroke-width="1.300"/><path d="M513 673v2M517.700 673v2M522.500 673v2M509 679h1.500M509 684h1.500" stroke="#b8b8b8" stroke-width="1.200"/><path d="M512.500 678c4 0 5 6.500 11 6.500" fill="none" stroke="#b8b8b8" stroke-width="1.200"/><path d="M15.6 709.5999999999999c2.800-4.400 7.800-4.400 10.600 0c-2.800 4.400-7.800 4.400-10.600 0z" fill="#c4c4c4"/><circle cx="20.9" cy="709.4" r="2" fill="#2a2a2a"/><circle cx="20.9" cy="709.4" r="0.900" fill="#c4c4c4"/><path d="M30 707.500h2.500l3.500-3v10.500l-3.500-3h-2.500z" fill="#c4c4c4"/><path d="M37.500 706.500a4 4 0 0 1 0 6.500M39.500 704.800a6.500 6.500 0 0 1 0 10" fill="none" stroke="#c4c4c4" stroke-width="1.100"/><circle cx="50.600" cy="709.700" r="3.600" fill="#c4c4c4"/><rect x="61.500" y="708.500" width="8.500" height="5.800" rx="0.800" fill="#c4c4c4"/><path d="M63.300 708.500v-1.600a2.450 2.450 0 0 1 4.900 0v1.600" fill="none" stroke="#c4c4c4" stroke-width="1.300"/><rect x="65.200" y="710.300" width="1.200" height="2.300" fill="#262626"/><path d="M92.500 703.800h4.700l6 6-4.800 4.800-5.900-6z" fill="#c4c4c4"/><circle cx="94.800" cy="706.100" r="1" fill="#262626"/><path d="M278.3 709.8a5 4.300 0 0 1 10 0z" fill="#c4c4c4"/><circle cx="281.5" cy="707.8" r="0.900" fill="#262626"/><circle cx="285.1" cy="707.8" r="0.900" fill="#262626"/><rect x="282.6" y="707.3" width="1.400" height="6.500" fill="#c4c4c4"/><rect x="277.3" y="710.5999999999999" width="4.300" height="1.100" fill="#c4c4c4"/><rect x="285.0" y="710.5999999999999" width="4.300" height="1.100" fill="#c4c4c4"/><rect x="278.3" y="713.0999999999999" width="10" height="1.100" fill="#c4c4c4"/><circle cx="298.500" cy="710" r="2.200" fill="none" stroke="#c4c4c4" stroke-width="1.100"/><path d="M298.500 705v2M298.500 713v2M293.500 710h2M301.500 710h2M295 706.500l1.400 1.400M300.600 712.100l1.400 1.400M302 706.500l-1.400 1.400M296.400 712.100l-1.400 1.400" stroke="#c4c4c4" stroke-width="1"/><path d="M308.500 705l9.500 9.500" stroke="#c4c4c4" stroke-width="1.500" stroke-dasharray="2.200 1"/><rect x="337.500" y="705" width="11.500" height="9.500" fill="none" stroke="#c4c4c4" stroke-width="1.100"/><rect x="340.500" y="706.500" width="5.500" height="6.500" fill="#9a9a9a"/><path d="M339 705.500v9M347.500 705.500v9" stroke="#c4c4c4" stroke-width="1" stroke-dasharray="1 1"/><g fill="none" stroke="#c4c4c4" stroke-width="1"><ellipse cx="356.500" cy="712" rx="3.600" ry="3" transform="rotate(-35 356.500 712)"/><ellipse cx="358" cy="710.800" rx="3.600" ry="3" transform="rotate(-35 358 710.800)"/></g><ellipse cx="360.300" cy="708.800" rx="4.200" ry="3.600" transform="rotate(-35 360.300 708.800)" fill="#8a8a8a" stroke="#c4c4c4" stroke-width="1"/><circle cx="373.700" cy="709.800" r="4.600" fill="none" stroke="#c4c4c4" stroke-width="1.100"/><path d="M377 706.500a4.600 4.600 0 0 1-6.500 6.500z" fill="#c4c4c4"/><path d="M388.500 705l4 2v4.800l-4 2.200-4-2.200v-4.800zM384.500 707l4 2 4-2M388.500 709v5" fill="none" stroke="#c4c4c4" stroke-width="1"/><path d="M15.6 726.5999999999999c2.800-4.400 7.800-4.400 10.600 0c-2.800 4.400-7.800 4.400-10.600 0z" fill="#d0d0d0"/><circle cx="20.9" cy="726.4" r="2" fill="#2a2a2a"/><circle cx="20.9" cy="726.4" r="0.900" fill="#d0d0d0"/><path d="M84.300 724.5l3 3.600-3 3.600" fill="none" stroke="#c0c0c0" stroke-width="1.100"/><g transform="translate(143.7 721.4)"><rect x="0" y="0" width="16.300" height="13" fill="#c2c2c2"/><ellipse cx="1.7" cy="1.8" rx="0.550" ry="0.900" fill="#1c1c1c"/><ellipse cx="1.7" cy="5.1" rx="0.550" ry="0.900" fill="#1c1c1c"/><ellipse cx="1.7" cy="8.4" rx="0.550" ry="0.900" fill="#1c1c1c"/><rect x="1.25" y="11" width="0.900" height="2" fill="#1c1c1c"/><ellipse cx="14.6" cy="1.8" rx="0.550" ry="0.900" fill="#1c1c1c"/><ellipse cx="14.6" cy="5.1" rx="0.550" ry="0.900" fill="#1c1c1c"/><ellipse cx="14.6" cy="8.4" rx="0.550" ry="0.900" fill="#1c1c1c"/><rect x="14.15" y="11" width="0.900" height="2" fill="#1c1c1c"/><rect x="3.500" y="10.800" width="9.500" height="0.900" fill="#1c1c1c"/><path d="M7.700 5.800l3.800 4h-6.600z" fill="#14a014" stroke="#1c1c1c" stroke-width="0.500"/><path d="M8.500 4.200h3.700v4l-1.200 0.300z" fill="#ff4040" stroke="#1c1c1c" stroke-width="0.500"/><circle cx="6.200" cy="5" r="1.800" fill="#3399ff" stroke="#2a4a6a" stroke-width="0.500"/></g><path d="M278.3 727.5a5 4.300 0 0 1 10 0z" fill="#d0d0d0"/><circle cx="281.5" cy="725.5" r="0.900" fill="#3a3a3a"/><circle cx="285.1" cy="725.5" r="0.900" fill="#3a3a3a"/><rect x="282.6" y="725.0" width="1.400" height="6.500" fill="#d0d0d0"/><rect x="277.3" y="728.3" width="4.300" height="1.100" fill="#d0d0d0"/><rect x="285.0" y="728.3" width="4.300" height="1.100" fill="#d0d0d0"/><rect x="278.3" y="730.8" width="10" height="1.100" fill="#d0d0d0"/><path d="M309 732l9-9.500" stroke="#d0d0d0" stroke-width="1.200"/><path d="M420.800 726.5a1.300 1.300 0 1 0-1.500 1.600a3 3 0 1 0-2.400-4.200a5 5 0 1 0 7.200-0.700" fill="none" stroke="#c0c0c0" stroke-width="1.100"/><path d="M510 725l3.500 3.500 3.500-3.500" fill="none" stroke="#c0c0c0" stroke-width="1.200"/><path d="M15.6 743.5999999999999c2.800-4.400 7.800-4.400 10.600 0c-2.800 4.400-7.800 4.400-10.600 0z" fill="#d0d0d0"/><circle cx="20.9" cy="743.4" r="2" fill="#2a2a2a"/><circle cx="20.9" cy="743.4" r="0.900" fill="#d0d0d0"/><path d="M84.300 741.5l3 3.600-3 3.600" fill="none" stroke="#c0c0c0" stroke-width="1.100"/><g transform="translate(143.7 738.4)"><rect x="0" y="0" width="16.300" height="13" fill="#c2c2c2"/><ellipse cx="1.7" cy="1.8" rx="0.550" ry="0.900" fill="#1c1c1c"/><ellipse cx="1.7" cy="5.1" rx="0.550" ry="0.900" fill="#1c1c1c"/><ellipse cx="1.7" cy="8.4" rx="0.550" ry="0.900" fill="#1c1c1c"/><rect x="1.25" y="11" width="0.900" height="2" fill="#1c1c1c"/><ellipse cx="14.6" cy="1.8" rx="0.550" ry="0.900" fill="#1c1c1c"/><ellipse cx="14.6" cy="5.1" rx="0.550" ry="0.900" fill="#1c1c1c"/><ellipse cx="14.6" cy="8.4" rx="0.550" ry="0.900" fill="#1c1c1c"/><rect x="14.15" y="11" width="0.900" height="2" fill="#1c1c1c"/><rect x="3.500" y="10.800" width="9.500" height="0.900" fill="#1c1c1c"/><path d="M7.700 5.800l3.800 4h-6.600z" fill="#14a014" stroke="#1c1c1c" stroke-width="0.500"/><path d="M8.500 4.200h3.700v4l-1.200 0.300z" fill="#ff4040" stroke="#1c1c1c" stroke-width="0.500"/><circle cx="6.200" cy="5" r="1.800" fill="#3399ff" stroke="#2a4a6a" stroke-width="0.500"/></g><path d="M278.3 744.5a5 4.300 0 0 1 10 0z" fill="#d0d0d0"/><circle cx="281.5" cy="742.5" r="0.900" fill="#3a3a3a"/><circle cx="285.1" cy="742.5" r="0.900" fill="#3a3a3a"/><rect x="282.6" y="742.0" width="1.400" height="6.500" fill="#d0d0d0"/><rect x="277.3" y="745.3" width="4.300" height="1.100" fill="#d0d0d0"/><rect x="285.0" y="745.3" width="4.300" height="1.100" fill="#d0d0d0"/><rect x="278.3" y="747.8" width="10" height="1.100" fill="#d0d0d0"/><path d="M309 749l9-9.500" stroke="#d0d0d0" stroke-width="1.200"/><path d="M420.800 743.5a1.300 1.300 0 1 0-1.500 1.600a3 3 0 1 0-2.400-4.200a5 5 0 1 0 7.200-0.700" fill="none" stroke="#c0c0c0" stroke-width="1.100"/><path d="M510 742l3.500 3.500 3.500-3.500" fill="none" stroke="#c0c0c0" stroke-width="1.200"/><path d="M15.6 760.5999999999999c2.800-4.400 7.800-4.400 10.600 0c-2.800 4.400-7.800 4.400-10.600 0z" fill="#d0d0d0"/><circle cx="20.9" cy="760.4" r="2" fill="#2a2a2a"/><circle cx="20.9" cy="760.4" r="0.900" fill="#d0d0d0"/><path d="M84.300 758.5l3 3.600-3 3.600" fill="none" stroke="#c0c0c0" stroke-width="1.100"/><g transform="translate(143.7 755.4)"><rect x="0" y="0" width="16.300" height="13" fill="#c2c2c2"/><ellipse cx="1.7" cy="1.8" rx="0.550" ry="0.900" fill="#1c1c1c"/><ellipse cx="1.7" cy="5.1" rx="0.550" ry="0.900" fill="#1c1c1c"/><ellipse cx="1.7" cy="8.4" rx="0.550" ry="0.900" fill="#1c1c1c"/><rect x="1.25" y="11" width="0.900" height="2" fill="#1c1c1c"/><ellipse cx="14.6" cy="1.8" rx="0.550" ry="0.900" fill="#1c1c1c"/><ellipse cx="14.6" cy="5.1" rx="0.550" ry="0.900" fill="#1c1c1c"/><ellipse cx="14.6" cy="8.4" rx="0.550" ry="0.900" fill="#1c1c1c"/><rect x="14.15" y="11" width="0.900" height="2" fill="#1c1c1c"/><rect x="3.500" y="10.800" width="9.500" height="0.900" fill="#1c1c1c"/><path d="M7.700 5.800l3.800 4h-6.600z" fill="#14a014" stroke="#1c1c1c" stroke-width="0.500"/><path d="M8.500 4.200h3.700v4l-1.200 0.300z" fill="#ff4040" stroke="#1c1c1c" stroke-width="0.500"/><circle cx="6.200" cy="5" r="1.800" fill="#3399ff" stroke="#2a4a6a" stroke-width="0.500"/></g><path d="M278.3 761.5a5 4.300 0 0 1 10 0z" fill="#d0d0d0"/><circle cx="281.5" cy="759.5" r="0.900" fill="#3a3a3a"/><circle cx="285.1" cy="759.5" r="0.900" fill="#3a3a3a"/><rect x="282.6" y="759.0" width="1.400" height="6.500" fill="#d0d0d0"/><rect x="277.3" y="762.3" width="4.300" height="1.100" fill="#d0d0d0"/><rect x="285.0" y="762.3" width="4.300" height="1.100" fill="#d0d0d0"/><rect x="278.3" y="764.8" width="10" height="1.100" fill="#d0d0d0"/><path d="M309 766l9-9.500" stroke="#d0d0d0" stroke-width="1.200"/><path d="M420.800 760.5a1.300 1.300 0 1 0-1.500 1.600a3 3 0 1 0-2.400-4.200a5 5 0 1 0 7.200-0.700" fill="none" stroke="#c0c0c0" stroke-width="1.100"/><path d="M510 759l3.500 3.500 3.500-3.500" fill="none" stroke="#c0c0c0" stroke-width="1.200"/><path d="M15.6 777.5999999999999c2.800-4.400 7.800-4.400 10.600 0c-2.800 4.400-7.800 4.400-10.600 0z" fill="#d0d0d0"/><circle cx="20.9" cy="777.4" r="2" fill="#2a2a2a"/><circle cx="20.9" cy="777.4" r="0.900" fill="#d0d0d0"/><path d="M84.300 775.5l3 3.600-3 3.600" fill="none" stroke="#c0c0c0" stroke-width="1.100"/><g transform="translate(143.7 772.4)"><rect x="0" y="0" width="16.300" height="13" fill="#c2c2c2"/><ellipse cx="1.7" cy="1.8" rx="0.550" ry="0.900" fill="#1c1c1c"/><ellipse cx="1.7" cy="5.1" rx="0.550" ry="0.900" fill="#1c1c1c"/><ellipse cx="1.7" cy="8.4" rx="0.550" ry="0.900" fill="#1c1c1c"/><rect x="1.25" y="11" width="0.900" height="2" fill="#1c1c1c"/><ellipse cx="14.6" cy="1.8" rx="0.550" ry="0.900" fill="#1c1c1c"/><ellipse cx="14.6" cy="5.1" rx="0.550" ry="0.900" fill="#1c1c1c"/><ellipse cx="14.6" cy="8.4" rx="0.550" ry="0.900" fill="#1c1c1c"/><rect x="14.15" y="11" width="0.900" height="2" fill="#1c1c1c"/><rect x="3.500" y="10.800" width="9.500" height="0.900" fill="#1c1c1c"/><path d="M7.700 5.800l3.800 4h-6.600z" fill="#14a014" stroke="#1c1c1c" stroke-width="0.500"/><path d="M8.500 4.200h3.700v4l-1.200 0.300z" fill="#ff4040" stroke="#1c1c1c" stroke-width="0.500"/><circle cx="6.200" cy="5" r="1.800" fill="#3399ff" stroke="#2a4a6a" stroke-width="0.500"/></g><path d="M278.3 778.5a5 4.300 0 0 1 10 0z" fill="#d0d0d0"/><circle cx="281.5" cy="776.5" r="0.900" fill="#3a3a3a"/><circle cx="285.1" cy="776.5" r="0.900" fill="#3a3a3a"/><rect x="282.6" y="776.0" width="1.400" height="6.500" fill="#d0d0d0"/><rect x="277.3" y="779.3" width="4.300" height="1.100" fill="#d0d0d0"/><rect x="285.0" y="779.3" width="4.300" height="1.100" fill="#d0d0d0"/><rect x="278.3" y="781.8" width="10" height="1.100" fill="#d0d0d0"/><path d="M309 783l9-9.500" stroke="#d0d0d0" stroke-width="1.200"/><path d="M420.800 777.5a1.300 1.300 0 1 0-1.500 1.600a3 3 0 1 0-2.400-4.200a5 5 0 1 0 7.200-0.700" fill="none" stroke="#c0c0c0" stroke-width="1.100"/><path d="M510 776l3.500 3.500 3.500-3.500" fill="none" stroke="#c0c0c0" stroke-width="1.200"/><path d="M15.6 794.5999999999999c2.800-4.400 7.800-4.400 10.600 0c-2.800 4.400-7.800 4.400-10.600 0z" fill="#d0d0d0"/><circle cx="20.9" cy="794.4" r="2" fill="#2a2a2a"/><circle cx="20.9" cy="794.4" r="0.900" fill="#d0d0d0"/><path d="M84.300 792.5l3 3.600-3 3.600" fill="none" stroke="#c0c0c0" stroke-width="1.100"/><g transform="translate(143.7 789.4)"><rect x="0" y="0" width="16.300" height="13" fill="#c2c2c2"/><ellipse cx="1.7" cy="1.8" rx="0.550" ry="0.900" fill="#1c1c1c"/><ellipse cx="1.7" cy="5.1" rx="0.550" ry="0.900" fill="#1c1c1c"/><ellipse cx="1.7" cy="8.4" rx="0.550" ry="0.900" fill="#1c1c1c"/><rect x="1.25" y="11" width="0.900" height="2" fill="#1c1c1c"/><ellipse cx="14.6" cy="1.8" rx="0.550" ry="0.900" fill="#1c1c1c"/><ellipse cx="14.6" cy="5.1" rx="0.550" ry="0.900" fill="#1c1c1c"/><ellipse cx="14.6" cy="8.4" rx="0.550" ry="0.900" fill="#1c1c1c"/><rect x="14.15" y="11" width="0.900" height="2" fill="#1c1c1c"/><rect x="3.500" y="10.800" width="9.500" height="0.900" fill="#1c1c1c"/><path d="M7.700 5.800l3.800 4h-6.600z" fill="#14a014" stroke="#1c1c1c" stroke-width="0.500"/><path d="M8.500 4.200h3.700v4l-1.200 0.300z" fill="#ff4040" stroke="#1c1c1c" stroke-width="0.500"/><circle cx="6.200" cy="5" r="1.800" fill="#3399ff" stroke="#2a4a6a" stroke-width="0.500"/></g><path d="M278.3 795.5a5 4.300 0 0 1 10 0z" fill="#d0d0d0"/><circle cx="281.5" cy="793.5" r="0.900" fill="#3a3a3a"/><circle cx="285.1" cy="793.5" r="0.900" fill="#3a3a3a"/><rect x="282.6" y="793.0" width="1.400" height="6.500" fill="#d0d0d0"/><rect x="277.3" y="796.3" width="4.300" height="1.100" fill="#d0d0d0"/><rect x="285.0" y="796.3" width="4.300" height="1.100" fill="#d0d0d0"/><rect x="278.3" y="798.8" width="10" height="1.100" fill="#d0d0d0"/><path d="M309 800l9-9.500" stroke="#d0d0d0" stroke-width="1.200"/><path d="M420.800 794.5a1.300 1.300 0 1 0-1.500 1.600a3 3 0 1 0-2.400-4.200a5 5 0 1 0 7.200-0.700" fill="none" stroke="#c0c0c0" stroke-width="1.100"/><path d="M510 793l3.500 3.500 3.500-3.500" fill="none" stroke="#c0c0c0" stroke-width="1.200"/><path d="M15.6 811.5999999999999c2.800-4.400 7.800-4.400 10.600 0c-2.800 4.400-7.800 4.400-10.600 0z" fill="#d0d0d0"/><circle cx="20.9" cy="811.4" r="2" fill="#2a2a2a"/><circle cx="20.9" cy="811.4" r="0.900" fill="#d0d0d0"/><path d="M84.300 809.5l3 3.600-3 3.600" fill="none" stroke="#c0c0c0" stroke-width="1.100"/><g transform="translate(143.7 806.4)"><rect x="0" y="0" width="16.300" height="13" fill="#c2c2c2"/><ellipse cx="1.7" cy="1.8" rx="0.550" ry="0.900" fill="#1c1c1c"/><ellipse cx="1.7" cy="5.1" rx="0.550" ry="0.900" fill="#1c1c1c"/><ellipse cx="1.7" cy="8.4" rx="0.550" ry="0.900" fill="#1c1c1c"/><rect x="1.25" y="11" width="0.900" height="2" fill="#1c1c1c"/><ellipse cx="14.6" cy="1.8" rx="0.550" ry="0.900" fill="#1c1c1c"/><ellipse cx="14.6" cy="5.1" rx="0.550" ry="0.900" fill="#1c1c1c"/><ellipse cx="14.6" cy="8.4" rx="0.550" ry="0.900" fill="#1c1c1c"/><rect x="14.15" y="11" width="0.900" height="2" fill="#1c1c1c"/><rect x="3.500" y="10.800" width="9.500" height="0.900" fill="#1c1c1c"/><path d="M7.700 5.800l3.800 4h-6.600z" fill="#14a014" stroke="#1c1c1c" stroke-width="0.500"/><path d="M8.500 4.200h3.700v4l-1.200 0.300z" fill="#ff4040" stroke="#1c1c1c" stroke-width="0.500"/><circle cx="6.200" cy="5" r="1.800" fill="#3399ff" stroke="#2a4a6a" stroke-width="0.500"/></g><path d="M278.3 812.5a5 4.300 0 0 1 10 0z" fill="#d0d0d0"/><circle cx="281.5" cy="810.5" r="0.900" fill="#3a3a3a"/><circle cx="285.1" cy="810.5" r="0.900" fill="#3a3a3a"/><rect x="282.6" y="810.0" width="1.400" height="6.500" fill="#d0d0d0"/><rect x="277.3" y="813.3" width="4.300" height="1.100" fill="#d0d0d0"/><rect x="285.0" y="813.3" width="4.300" height="1.100" fill="#d0d0d0"/><rect x="278.3" y="815.8" width="10" height="1.100" fill="#d0d0d0"/><path d="M309 817l9-9.500" stroke="#d0d0d0" stroke-width="1.200"/><path d="M420.800 811.5a1.300 1.300 0 1 0-1.500 1.600a3 3 0 1 0-2.400-4.200a5 5 0 1 0 7.200-0.700" fill="none" stroke="#c0c0c0" stroke-width="1.100"/><path d="M510 810l3.500 3.500 3.500-3.500" fill="none" stroke="#c0c0c0" stroke-width="1.200"/><rect x="606.92" y="693.200" width="1.600" height="4.800" fill="#8e8e8e"/><rect x="664.24" y="693.200" width="1.600" height="4.800" fill="#8e8e8e"/><rect x="721.56" y="690.600" width="1.600" height="7.400" fill="#8e8e8e"/><rect x="778.88" y="693.200" width="1.600" height="4.800" fill="#8e8e8e"/><rect x="836.20" y="693.200" width="1.600" height="4.800" fill="#8e8e8e"/><rect x="893.52" y="690.600" width="1.600" height="7.400" fill="#8e8e8e"/><rect x="950.84" y="693.200" width="1.600" height="4.800" fill="#8e8e8e"/><rect x="1008.16" y="693.200" width="1.600" height="4.800" fill="#8e8e8e"/><rect x="1065.48" y="690.600" width="1.600" height="7.400" fill="#8e8e8e"/><rect x="1122.80" y="693.200" width="1.600" height="4.800" fill="#8e8e8e"/><rect x="1180.12" y="693.200" width="1.600" height="4.800" fill="#8e8e8e"/><rect x="1237.44" y="690.600" width="1.600" height="7.400" fill="#8e8e8e"/><rect x="1294.76" y="693.200" width="1.600" height="4.800" fill="#8e8e8e"/><rect x="1352.08" y="693.200" width="1.600" height="4.800" fill="#8e8e8e"/><rect x="1409.40" y="690.600" width="1.600" height="7.400" fill="#8e8e8e"/><rect x="1466.72" y="693.200" width="1.600" height="4.800" fill="#8e8e8e"/><rect x="1524.04" y="693.200" width="1.600" height="4.800" fill="#8e8e8e"/><filter id="nz" x="0" y="0" width="100%" height="100%"><feTurbulence type="fractalNoise" baseFrequency="0.800" numOctaves="2" seed="7"/><feColorMatrix type="matrix" values="0 0 0 0 0.250  0 0 0 0 0.200  0 0 0 0 0.120  0.700 0 0 0 -0.220"/></filter><filter id="nz2" x="0" y="0" width="100%" height="100%"><feTurbulence type="fractalNoise" baseFrequency="0.700" numOctaves="2" seed="21"/><feColorMatrix type="matrix" values="0 0 0 0 0.850  0 0 0 0 0.800  0 0 0 0 0.650  0.500 0 0 0 -0.200"/></filter><rect x="551" y="720.2" width="1019" height="14" filter="url(#nz)"/><rect x="551" y="720.2" width="1019" height="14" filter="url(#nz2)"/><path d="M551 718.8h6.500q-4.500 1-6.500 5.500z" fill="#050505"/><path d="M1570.200 718.8h-6.500q4.500 1 6.500 5.500z" fill="#050505"/><rect x="551" y="737.2" width="1019" height="14" filter="url(#nz)"/><rect x="551" y="737.2" width="1019" height="14" filter="url(#nz2)"/><path d="M551 735.8h6.500q-4.500 1-6.500 5.500z" fill="#050505"/><path d="M1570.200 735.8h-6.500q4.500 1 6.500 5.500z" fill="#050505"/><rect x="551" y="754.2" width="1019" height="14" filter="url(#nz)"/><rect x="551" y="754.2" width="1019" height="14" filter="url(#nz2)"/><path d="M551 752.8h6.500q-4.500 1-6.500 5.500z" fill="#050505"/><path d="M1570.200 752.8h-6.500q4.500 1 6.500 5.500z" fill="#050505"/><rect x="551" y="771.2" width="1019" height="14" filter="url(#nz)"/><rect x="551" y="771.2" width="1019" height="14" filter="url(#nz2)"/><path d="M551 769.8h6.500q-4.500 1-6.500 5.500z" fill="#050505"/><path d="M1570.200 769.8h-6.500q4.500 1 6.500 5.500z" fill="#050505"/><rect x="551" y="788.2" width="1019" height="14" filter="url(#nz)"/><rect x="551" y="788.2" width="1019" height="14" filter="url(#nz2)"/><path d="M551 786.8h6.500q-4.500 1-6.500 5.500z" fill="#050505"/><path d="M1570.200 786.8h-6.500q4.500 1 6.500 5.500z" fill="#050505"/><rect x="551" y="805.2" width="1019" height="14" filter="url(#nz)"/><rect x="551" y="805.2" width="1019" height="14" filter="url(#nz2)"/><path d="M551 803.8h6.500q-4.500 1-6.500 5.500z" fill="#050505"/><path d="M1570.200 803.8h-6.500q4.500 1 6.500 5.500z" fill="#050505"/><rect x="549.800" y="690" width="1.300" height="314" fill="#2d8ceb"/><path d="M545.200 684.600h11.100v5.800l-5.550 6.800-5.550-6.800z" fill="#2d8ceb"/><rect x="549.800" y="690.300" width="1.300" height="6" fill="#9ab0c8"/><path d="M1581.500 701h11v9l-5.500 4.500-5.500-4.500z" fill="#b0b0b0"/><path d="M1586 724h6.200v7h-6.200z" fill="#b4b4b4"/><path d="M1586 721.800l-7.500 7h4" fill="none" stroke="#c0c0c0" stroke-width="1.100"/><circle cx="1584.600" cy="730.500" r="2.700" fill="#232323" stroke="#c0c0c0" stroke-width="1.200"/><g fill="none" stroke="#2d8ceb" stroke-width="1.200"><path d="M18 1016.500v-7.500h7.500"/><rect x="20.500" y="1011.500" width="7.500" height="7.500"/></g><rect x="23.300" y="1014.300" width="2" height="2" fill="#2d8ceb"/><g fill="none" stroke="#b8b8b8" stroke-width="1.100"><circle cx="40.500" cy="1012.500" r="4"/><rect x="41.500" y="1013.500" width="5.500" height="5.500" fill="#262626"/></g><path d="M57.500 1009h5.500v11h-5.500z" fill="#8a8a8a"/><path d="M57.500 1009.500c-1.500 0-1.500 1-1.500 2.500v1.500l-1.500 1 1.500 1v1.500c0 1.500 0 2.500 1.500 2.500M63 1009.500c1.500 0 1.500 1 1.500 2.500v1.500l1.500 1-1.500 1v1.500c0 1.500 0 2.500-1.500 2.500" fill="none" stroke="#b8b8b8" stroke-width="1.100"/><ellipse cx="78" cy="1013.500" rx="4.500" ry="4" fill="#b8b8b8"/><path d="M73.500 1018.500h10.500l-1-2.500h-8z" fill="#b8b8b8"/><path d="M82.500 1010l2.500 2.500M85 1010l-1 3" stroke="#b8b8b8" stroke-width="0.900"/><path d="M548.100 1015.300l3.200-2.600 1.500 1.200 2.300-2.900 3 4.300z" fill="#b8b8b8"/><path d="M578 1013.500h39" stroke="#3a3a3a" stroke-width="2.400"/><circle cx="573.900" cy="1015.100" r="3.700" fill="#222" stroke="#a8a8a8" stroke-width="1.500"/><path d="M628.700 1017.200l4.800-5.200h1.200l-4.200 5.200zM633.500 1017.200l5.600-7 6 7z" fill="#b8b8b8"/></svg>
<div class="t" style="left:322.50px;top:703px;font-size:12px;line-height:14px;color:#c4c4c4;font-style:italic;">fx</div>
</div></div>
</body>
</html>
